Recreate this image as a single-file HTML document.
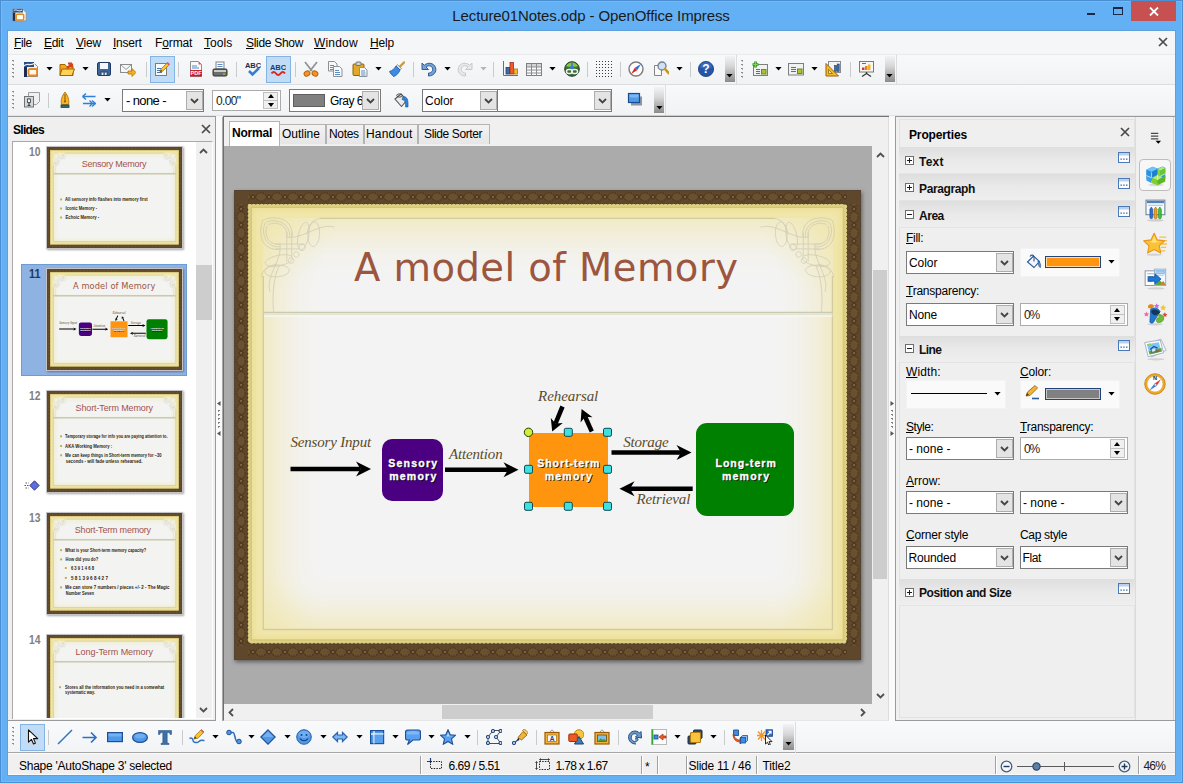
<!DOCTYPE html>
<html lang="en"><head><meta charset="utf-8"><title>Lecture01Notes.odp - OpenOffice Impress</title>
<style>
html,body{margin:0;padding:0;background:#64b0f5;}
body{width:1183px;height:783px;overflow:hidden;position:relative;font-family:"Liberation Sans",sans-serif;font-size:12px;}
#root{position:absolute;left:0;top:0;width:1183px;height:783px;overflow:hidden;}
#root div,#root span.t,#root svg{position:absolute;}
span.t{white-space:nowrap;}
u{text-decoration:underline;text-underline-offset:1px;}
</style></head>
<body><div id="root">
<!-- frame -->
<div style="left:0px;top:0px;width:1183px;height:783px;background:#64b0f5;"></div>
<div style="left:0px;top:0px;width:1183px;height:783px;box-sizing:border-box;border:1px solid #4a8fd2;"></div>
<div style="left:1px;top:1px;width:1181px;height:781px;box-sizing:border-box;border:1px solid #72bafb;"></div>
<div style="left:7px;top:30px;width:1169px;height:746px;box-sizing:border-box;border:1px solid #5f9fdc;"></div>
<div style="left:8px;top:31px;width:1167px;height:744px;background:#f5f6f7;"></div>
<span id="title" class="t" style="top:5.50px;font-size:15px;line-height:20px;color:#1a1a1a;letter-spacing:-0.104px;left:591px;transform:translateX(-50%);">Lecture01Notes.odp - OpenOffice Impress</span>
<svg style="left:12px;top:7px" width="15" height="16" viewBox="1 3 18 16">
<path d="M2 4 L14 4 L18 8 L18 18 L2 18 Z" fill="#f4f1ea" stroke="#8a8a8a" stroke-width="1"/>
<path d="M2 4 L14 4 L14 8 L2 8 Z" fill="#2d4f86"/>
<path d="M3 6 C6 3 9 8 13 5" stroke="#fff" stroke-width="1.2" fill="none"/>
<rect x="2" y="8" width="3" height="10" fill="#1d2f57"/>
<rect x="6" y="10" width="9" height="7" rx="1.5" fill="#fff" stroke="#e58b1d" stroke-width="1.8"/>
</svg>
<div style="left:1087px;top:13px;width:8px;height:2px;background:#1a2a44;"></div>
<div style="left:1113px;top:7px;width:10px;height:8px;box-sizing:border-box;border:1px solid #1a2a44;border-top:2px solid #1a2a44;"></div>
<div style="left:1131px;top:1px;width:45px;height:20px;background:#c75050;"></div>
<svg style="left:1149px;top:7px" width="10" height="9" viewBox="0 0 10 9"><path d="M1 .5L9 8.500M9 .5L1 8.500" stroke="#fff" stroke-width="1.800" fill="none"/></svg>
<!-- menubar -->
<div style="left:8px;top:31px;width:1167px;height:23px;background:#f5f6f7;"></div>
<span id="m_File" class="t" style="top:35.00px;font-size:12px;line-height:16px;color:#000;letter-spacing:-0.415px;left:14px;"><u>F</u>ile</span>
<span id="m_Edit" class="t" style="top:35.00px;font-size:12px;line-height:16px;color:#000;letter-spacing:-0.301px;left:44px;"><u>E</u>dit</span>
<span id="m_View" class="t" style="top:35.00px;font-size:12px;line-height:16px;color:#000;letter-spacing:-0.203px;left:76px;"><u>V</u>iew</span>
<span id="m_Insert" class="t" style="top:35.00px;font-size:12px;line-height:16px;color:#000;letter-spacing:-0.239px;left:113px;"><u>I</u>nsert</span>
<span id="m_Format" class="t" style="top:35.00px;font-size:12px;line-height:16px;color:#000;letter-spacing:-0.122px;left:155px;">F<u>o</u>rmat</span>
<span id="m_Tools" class="t" style="top:35.00px;font-size:12px;line-height:16px;color:#000;letter-spacing:0.077px;left:204px;"><u>T</u>ools</span>
<span id="m_Slide_Show" class="t" style="top:35.00px;font-size:12px;line-height:16px;color:#000;letter-spacing:-0.305px;left:246px;"><u>S</u>lide Show</span>
<span id="m_Window" class="t" style="top:35.00px;font-size:12px;line-height:16px;color:#000;letter-spacing:0.185px;left:314px;"><u>W</u>indow</span>
<span id="m_Help" class="t" style="top:35.00px;font-size:12px;line-height:16px;color:#000;letter-spacing:-0.147px;left:370px;"><u>H</u>elp</span>
<svg style="left:1158px;top:37px" width="10" height="10" viewBox="0 0 10 10"><path d="M1 1 L9 9 M9 1 L1 9" stroke="#4a4a4a" stroke-width="1.7" fill="none"/></svg>
<!-- toolbar1 -->
<div style="left:8px;top:54px;width:1167px;height:1px;background:#e9eaeb;"></div>
<div style="left:8px;top:55px;width:1167px;height:29px;background:linear-gradient(#f8f9fa,#f1f2f3);"></div>
<div style="left:8px;top:84px;width:1167px;height:1px;background:#dcdddf;"></div>
<div style="left:736px;top:55px;width:1px;height:30px;background:#dcdddf;"></div>
<div style="left:896px;top:55px;width:1px;height:30px;background:#dcdddf;"></div>
<div style="left:12px;top:60px;width:2px;height:1px;background:#8a8a8a;"></div>
<div style="left:13px;top:61px;width:1px;height:1px;background:#b8b8b8;"></div>
<div style="left:12px;top:64px;width:2px;height:1px;background:#8a8a8a;"></div>
<div style="left:13px;top:65px;width:1px;height:1px;background:#b8b8b8;"></div>
<div style="left:12px;top:68px;width:2px;height:1px;background:#8a8a8a;"></div>
<div style="left:13px;top:69px;width:1px;height:1px;background:#b8b8b8;"></div>
<div style="left:12px;top:72px;width:2px;height:1px;background:#8a8a8a;"></div>
<div style="left:13px;top:73px;width:1px;height:1px;background:#b8b8b8;"></div>
<div style="left:12px;top:76px;width:2px;height:1px;background:#8a8a8a;"></div>
<div style="left:13px;top:77px;width:1px;height:1px;background:#b8b8b8;"></div>
<div style="left:150px;top:56px;width:25px;height:27px;box-sizing:border-box;background:#c2dcf5;border:1px solid #84b4e6;"></div>
<div style="left:266px;top:56px;width:25px;height:27px;box-sizing:border-box;background:#c2dcf5;border:1px solid #84b4e6;"></div>
<svg style="left:23px;top:61px" width="16" height="16" viewBox="0 0 16 16"><path d="M1.5 1.5h9l4 4v10h-13z" fill="#f6f3ec" stroke="#8d8d8d"/>
<path d="M1 1h10v5H1z" fill="#274b82"/><path d="M1 6h3v10H1z" fill="#1b2c54"/>
<path d="M1 5C4 1 7 6 12 2" stroke="#e8eef8" stroke-width="1.3" fill="none"/>
<rect x="5.5" y="8" width="8.5" height="6.5" rx="1.5" fill="#fff7ea" stroke="#e38a25" stroke-width="1.8"/></svg>
<svg style="left:59px;top:61px" width="16" height="16" viewBox="0 0 16 16"><path d="M1 3.5h5l1.5 2H14v9H1z" fill="#f0a81c" stroke="#a86200"/>
<path d="M3 8h12.5l-2.5 6.5H1z" fill="#ffd257" stroke="#a86200"/>
<path d="M8 7.5L13 2.5M13 2.5h-4M13 2.5v4" stroke="#d8431b" stroke-width="2.2" fill="none"/></svg>
<svg style="left:96px;top:61px" width="16" height="16" viewBox="0 0 16 16"><rect x="1.5" y="1.5" width="13" height="13" rx="1.5" fill="#3d6595" stroke="#1f3b63"/>
<rect x="4" y="2" width="8" height="6" fill="#f4f7fb"/><rect x="4.5" y="10.5" width="7" height="4" fill="#24436e"/>
<rect x="5.5" y="11.5" width="2" height="2.5" fill="#d9e2ee"/><rect x="8.7" y="11.5" width="2" height="2.5" fill="#d9e2ee"/></svg>
<svg style="left:120px;top:61px" width="16" height="16" viewBox="0 0 16 16"><rect x="0.5" y="3.5" width="11" height="8" fill="#f6f6f6" stroke="#8c8c8c"/>
<path d="M1 4l5 4.5L11 4" stroke="#9a9a9a" fill="none"/>
<path d="M8 10h4V7.5l4 4-4 4V13H8z" fill="#f2b01e" stroke="#b77700" stroke-width=".8"/></svg>
<svg style="left:154px;top:61px" width="16" height="16" viewBox="0 0 16 16"><rect x="1.5" y="2.5" width="11" height="12" fill="#fafafa" stroke="#7d7d7d"/>
<path d="M3 7.500h4M3 9.500h3M3 11.500h5" stroke="#4a76b0" stroke-width="1"/>
<path d="M6 11l1-3 6.5-6.5 2 2L9 10z" fill="#f6c431" stroke="#a37a10" stroke-width=".8"/>
<path d="M12.5 2.2l1.3-1.3 2 2-1.3 1.3z" fill="#e4576b"/><path d="M6 11l1-2.2 1.2 1.2z" fill="#3a3a3a"/></svg>
<svg style="left:188px;top:61px" width="16" height="16" viewBox="0 0 16 16"><path d="M2.5 .5h8l3 3v12h-11z" fill="#fafafa" stroke="#8f8f8f"/>
<path d="M10.5 .5v3h3z" fill="#e05a5a"/><path d="M4 5h5M4 7h7" stroke="#4a8bd1" stroke-width="1.2"/>
<rect x="2" y="9" width="12" height="6.5" fill="#c9211e"/>
<text x="8" y="14.3" font-size="5.5" font-weight="bold" fill="#fff" text-anchor="middle" font-family="Liberation Sans,sans-serif">PDF</text></svg>
<svg style="left:212px;top:61px" width="16" height="16" viewBox="0 0 16 16"><rect x="4" y="1" width="8" height="7" fill="#fbfbfb" stroke="#858585"/>
<path d="M5.5 3.5h5M5.5 5.5h5" stroke="#5c8fc8" stroke-width="1"/>
<rect x="1" y="8" width="14" height="7" rx="1.2" fill="#6c6f6c" stroke="#2f312f"/>
<rect x="2" y="9" width="12" height="2" fill="#c9ccc9"/><rect x="11" y="12.5" width="2.2" height="1.2" fill="#8ed04a"/></svg>
<svg style="left:245px;top:61px" width="16" height="16" viewBox="0 0 16 16"><text x="8" y="7" font-size="7.5" font-weight="bold" fill="#1c2c4c" text-anchor="middle" font-family="Liberation Sans,sans-serif">ABC</text>
<path d="M4 10l3.5 3.5L14 7" stroke="#2f7fd6" stroke-width="2.6" fill="none"/></svg>
<svg style="left:270px;top:61px" width="16" height="16" viewBox="0 0 16 16"><text x="8" y="8.5" font-size="7.5" font-weight="bold" fill="#1c3a6e" text-anchor="middle" font-family="Liberation Sans,sans-serif">ABC</text>
<path d="M1.5 12.5c1.5-2 3-2 4.5 0s3 2 4.5 0 3-2 4.5 0" stroke="#d9281e" stroke-width="2" fill="none"/></svg>
<svg style="left:303px;top:61px" width="16" height="16" viewBox="0 0 16 16"><path d="M2 1l7 9M14 1l-7 9" stroke="#8e9499" stroke-width="1.8" fill="none"/>
<ellipse cx="4" cy="12.5" rx="3" ry="2.5" fill="#f29526" stroke="#b85f05" transform="rotate(-30 4 12.5)"/>
<ellipse cx="12" cy="12.5" rx="3" ry="2.5" fill="#f29526" stroke="#b85f05" transform="rotate(30 12 12.5)"/></svg>
<svg style="left:327px;top:61px" width="16" height="16" viewBox="0 0 16 16"><path d="M1.5 .5h6l2.5 2.5v7h-8.500z" fill="#f7f9fb" stroke="#8a9199"/><path d="M3 4.500h4M3 6.500h5M3 8.500h3" stroke="#5b8cc4" stroke-width="1"/>
<path d="M6.500 5.500h6l2.500 2.500v7.500h-8.500z" fill="#f7f9fb" stroke="#8a9199"/><path d="M8 9.500h4M8 11.500h5M8 13.500h5" stroke="#5b8cc4" stroke-width="1"/></svg>
<svg style="left:352px;top:61px" width="16" height="16" viewBox="0 0 16 16"><rect x="1" y="3" width="11" height="11.5" rx="1" fill="#e2a927" stroke="#8e6408"/>
<rect x="4" y="1" width="5" height="3.5" rx="1" fill="#cfd3d6" stroke="#6f7478"/>
<path d="M7.500 6.500h5l2.500 2.500v6.500h-7.500z" fill="#f7f9fb" stroke="#8a9199"/><path d="M9 10h4M9 12h4.500M9 14h4.500" stroke="#5b8cc4" stroke-width="1"/></svg>
<svg style="left:389px;top:61px" width="16" height="16" viewBox="0 0 16 16"><path d="M10 5.500l5-5 1 1-5 5z" fill="#e7a928" stroke="#a06b07" stroke-width=".7"/>
<path d="M8.500 3.500l4 4-1.500 1.500-4-4z" fill="#d9dde2" stroke="#7c8389" stroke-width=".7"/>
<path d="M7 5l4 4c-1 3-4 6-6.500 6.500C3 14 1 12 .5 10.500 3 9.500 5.500 8 7 5z" fill="#3f8be0" stroke="#1d5aa8" stroke-width=".8"/></svg>
<svg style="left:421px;top:61px" width="16" height="16" viewBox="0 0 16 16"><path d="M1 2v6.500h6.500L5 6c2-1.800 5.500-1.500 6.500 1 1 2.700-1 5-4 5v3c5 0 8.500-4 7-8.500C13 2 7 .8 3.300 4.300z" fill="#74a3d8" stroke="#2d5c99" stroke-width="1"/></svg>
<svg style="left:457px;top:61px" width="16" height="16" viewBox="0 0 16 16"><path d="M15 2v6.500H8.500L11 6C9 4.200 5.500 4.500 4.500 7c-1 2.700 1 5 4 5v3c-5 0-8.500-4-7-8.500C3 2 9 .8 12.700 4.300z" fill="#e9e9e9" stroke="#c9c9c9" stroke-width="1"/></svg>
<svg style="left:502px;top:61px" width="16" height="16" viewBox="0 0 16 16"><path d="M1.500 0v14.500H16" stroke="#6e6e6e" fill="none"/>
<rect x="4" y="6.500" width="3.500" height="6.500" fill="#3a6ea5" stroke="#1d3f6b" stroke-width=".8"/>
<rect x="8" y="1.500" width="3.500" height="11.500" fill="#ef5b2a" stroke="#a32d09" stroke-width=".8"/>
<rect x="12" y="8" width="3.500" height="5" fill="#f7b92d" stroke="#a8750a" stroke-width=".8"/></svg>
<svg style="left:526px;top:61px" width="16" height="16" viewBox="0 0 16 16"><rect x=".5" y="2.500" width="15" height="12" fill="#fdfdfd" stroke="#7f7f7f"/>
<rect x="1" y="3" width="14" height="3" fill="#d4d4d4"/>
<path d="M.5 6h15M.5 9h15M.5 12h15M5.500 2.500v12M10.500 2.500v12" stroke="#8c8c8c" stroke-width="1"/></svg>
<svg style="left:564px;top:61px" width="16" height="16" viewBox="0 0 16 16"><circle cx="8" cy="8" r="7.300" fill="#3c6a3a" stroke="#21402b"/>
<path d="M2 5c2-3 4-3.500 6-3.500s4 .5 6 3.500c-2 1.500-10 1.500-12 0z" fill="#8cc63f"/>
<path d="M8 2v5M6 5.500l2 2.500 2-2.500" stroke="#2f7fd6" stroke-width="1.600" fill="none"/>
<rect x="2.500" y="8.500" width="5.500" height="4" rx="2" fill="none" stroke="#eef3ee" stroke-width="1.500"/>
<rect x="8" y="8.500" width="5.500" height="4" rx="2" fill="none" stroke="#eef3ee" stroke-width="1.500"/></svg>
<svg style="left:596px;top:61px" width="16" height="16" viewBox="0 0 16 16"><rect x="0" y="0" width="1" height="1" fill="#3c3c3c"/><rect x="0" y="3" width="1" height="1" fill="#3c3c3c"/><rect x="0" y="6" width="1" height="1" fill="#3c3c3c"/><rect x="0" y="9" width="1" height="1" fill="#3c3c3c"/><rect x="0" y="12" width="1" height="1" fill="#3c3c3c"/><rect x="0" y="15" width="1" height="1" fill="#3c3c3c"/><rect x="3" y="0" width="1" height="1" fill="#3c3c3c"/><rect x="3" y="3" width="1" height="1" fill="#3c3c3c"/><rect x="3" y="6" width="1" height="1" fill="#3c3c3c"/><rect x="3" y="9" width="1" height="1" fill="#3c3c3c"/><rect x="3" y="12" width="1" height="1" fill="#3c3c3c"/><rect x="3" y="15" width="1" height="1" fill="#3c3c3c"/><rect x="6" y="0" width="1" height="1" fill="#3c3c3c"/><rect x="6" y="3" width="1" height="1" fill="#3c3c3c"/><rect x="6" y="6" width="1" height="1" fill="#3c3c3c"/><rect x="6" y="9" width="1" height="1" fill="#3c3c3c"/><rect x="6" y="12" width="1" height="1" fill="#3c3c3c"/><rect x="6" y="15" width="1" height="1" fill="#3c3c3c"/><rect x="9" y="0" width="1" height="1" fill="#3c3c3c"/><rect x="9" y="3" width="1" height="1" fill="#3c3c3c"/><rect x="9" y="6" width="1" height="1" fill="#3c3c3c"/><rect x="9" y="9" width="1" height="1" fill="#3c3c3c"/><rect x="9" y="12" width="1" height="1" fill="#3c3c3c"/><rect x="9" y="15" width="1" height="1" fill="#3c3c3c"/><rect x="12" y="0" width="1" height="1" fill="#3c3c3c"/><rect x="12" y="3" width="1" height="1" fill="#3c3c3c"/><rect x="12" y="6" width="1" height="1" fill="#3c3c3c"/><rect x="12" y="9" width="1" height="1" fill="#3c3c3c"/><rect x="12" y="12" width="1" height="1" fill="#3c3c3c"/><rect x="12" y="15" width="1" height="1" fill="#3c3c3c"/><rect x="15" y="0" width="1" height="1" fill="#3c3c3c"/><rect x="15" y="3" width="1" height="1" fill="#3c3c3c"/><rect x="15" y="6" width="1" height="1" fill="#3c3c3c"/><rect x="15" y="9" width="1" height="1" fill="#3c3c3c"/><rect x="15" y="12" width="1" height="1" fill="#3c3c3c"/><rect x="15" y="15" width="1" height="1" fill="#3c3c3c"/></svg>
<svg style="left:628px;top:61px" width="16" height="16" viewBox="0 0 16 16"><circle cx="8" cy="8" r="7" fill="#fdfdfd" stroke="#7b7b7b" stroke-width="1.400"/>
<path d="M13 3L9.200 9.200 6.800 6.800z" fill="#2f6fd0"/><path d="M3 13l3.800-6.200 2.400 2.400z" fill="#e0241d"/></svg>
<svg style="left:653px;top:61px" width="16" height="16" viewBox="0 0 16 16"><path d="M1.500 4.500h7v10h-7z" fill="#fbfbfb" stroke="#858585"/>
<circle cx="9" cy="5" r="4" fill="#cfe2f5" stroke="#6e8196" stroke-width="1.300"/>
<path d="M12 8l3.500 4" stroke="#c79a12" stroke-width="2.600" stroke-linecap="round"/></svg>
<svg style="left:698px;top:61px" width="16" height="16" viewBox="0 0 16 16"><circle cx="8" cy="8" r="7.600" fill="#2455a8" stroke="#163a7a" stroke-width=".8"/>
<path d="M2 6.500a6 5.500 0 0 1 12 0c-3 1.500-9 1.500-12 0z" fill="#3f74c9" opacity=".7"/>
<text x="8" y="12.300" font-size="12" font-weight="bold" fill="#fff" text-anchor="middle" font-family="Liberation Sans,sans-serif">?</text></svg>
<svg style="left:752px;top:61px" width="16" height="16" viewBox="0 0 16 16"><rect x="1.500" y="3.500" width="14" height="11" fill="#f1f1f1" stroke="#7e7e7e"/>
<path d="M4 8.500h4M4 10.500h4M4 12.500h4" stroke="#4272b8" stroke-width="1"/>
<rect x="9.500" y="8.500" width="4.500" height="4.500" fill="#a6c532" stroke="#6f8a11"/>
<path d="M3.500 .5v6M.5 3.500h6" stroke="#2f9a1c" stroke-width="2.600"/><path d="M3.500 1.300v4.400M1.300 3.500h4.400" stroke="#7fd957" stroke-width="1"/></svg>
<svg style="left:788px;top:61px" width="16" height="16" viewBox="0 0 16 16"><rect x=".5" y="2.500" width="15" height="11.500" fill="#f1f1f1" stroke="#7e7e7e"/>
<path d="M3 6.500h5M3 8.500h5M3 10.500h5" stroke="#4272b8" stroke-width="1"/>
<rect x="9.500" y="8" width="4.500" height="4.500" fill="#a6c532" stroke="#6f8a11"/></svg>
<svg style="left:825px;top:61px" width="16" height="16" viewBox="0 0 16 16"><rect x="3.500" y=".5" width="12" height="11" fill="#f4f4f4" stroke="#8a8a8a"/>
<rect x="9.500" y="4.500" width="2" height="6" fill="#3c6ea8" stroke="#1d3f6b" stroke-width=".6"/><rect x="12.200" y="3" width="2" height="7.500" fill="#3c6ea8" stroke="#1d3f6b" stroke-width=".6"/>
<path d="M1 2.500L13.500 15H1z" fill="#f6b928" stroke="#96650a"/><path d="M3.500 8.500l4 4h-4z" fill="#fbe5a0" stroke="#96650a" stroke-width=".8"/></svg>
<svg style="left:858px;top:61px" width="16" height="16" viewBox="0 0 16 16"><rect x="1.500" y=".5" width="14" height="10.500" fill="#f6f6f6" stroke="#7a7a7a"/>
<rect x="4" y="6.500" width="2.500" height="2.500" fill="#d53a1e"/><rect x="7" y="5" width="2.500" height="4" fill="#ee7b1c"/><rect x="10" y="3.500" width="2.500" height="5.500" fill="#f3b321"/>
<path d="M4 2.500h4" stroke="#4272b8"/><path d="M8.500 11v2M8.500 12.500l-4.500 3M8.500 12.500l4.500 3" stroke="#3a3a3a" stroke-width="1.300" fill="none"/></svg>
<svg style="left:46px;top:67px" width="7" height="4" viewBox="0 0 7 4"><path d="M.4 0h6.200L3.500 3.600z" fill="#000"/></svg>
<svg style="left:82px;top:67px" width="7" height="4" viewBox="0 0 7 4"><path d="M.4 0h6.200L3.500 3.600z" fill="#000"/></svg>
<svg style="left:375px;top:67px" width="7" height="4" viewBox="0 0 7 4"><path d="M.4 0h6.200L3.500 3.600z" fill="#000"/></svg>
<svg style="left:444px;top:67px" width="7" height="4" viewBox="0 0 7 4"><path d="M.4 0h6.200L3.500 3.600z" fill="#000"/></svg>
<svg style="left:549px;top:67px" width="7" height="4" viewBox="0 0 7 4"><path d="M.4 0h6.200L3.500 3.600z" fill="#000"/></svg>
<svg style="left:676px;top:67px" width="7" height="4" viewBox="0 0 7 4"><path d="M.4 0h6.200L3.500 3.600z" fill="#000"/></svg>
<svg style="left:775px;top:67px" width="7" height="4" viewBox="0 0 7 4"><path d="M.4 0h6.200L3.500 3.600z" fill="#000"/></svg>
<svg style="left:811px;top:67px" width="7" height="4" viewBox="0 0 7 4"><path d="M.4 0h6.200L3.500 3.600z" fill="#000"/></svg>
<svg style="left:480px;top:67px" width="7" height="4" viewBox="0 0 7 4"><path d="M.4 0h6.200L3.500 3.600z" fill="#b4b4b4"/></svg>
<div style="left:146px;top:62px;width:1px;height:15px;background:#c9cacb;"></div>
<div style="left:178px;top:62px;width:1px;height:15px;background:#c9cacb;"></div>
<div style="left:236px;top:62px;width:1px;height:15px;background:#c9cacb;"></div>
<div style="left:295px;top:62px;width:1px;height:15px;background:#c9cacb;"></div>
<div style="left:413px;top:62px;width:1px;height:15px;background:#c9cacb;"></div>
<div style="left:493px;top:62px;width:1px;height:15px;background:#c9cacb;"></div>
<div style="left:587px;top:62px;width:1px;height:15px;background:#c9cacb;"></div>
<div style="left:620px;top:62px;width:1px;height:15px;background:#c9cacb;"></div>
<div style="left:690px;top:62px;width:1px;height:15px;background:#c9cacb;"></div>
<div style="left:850px;top:62px;width:1px;height:15px;background:#c9cacb;"></div>
<div style="left:725px;top:56px;width:10px;height:26px;background:linear-gradient(#f3f3f3,#d6d6d6 40%,#8a8a8a);"></div>
<svg style="left:726px;top:74px" width="7" height="4" viewBox="0 0 7 4"><path d="M.4 0h6.200L3.500 3.600z" fill="#000"/></svg>
<div style="left:741px;top:60px;width:2px;height:1px;background:#8a8a8a;"></div>
<div style="left:742px;top:61px;width:1px;height:1px;background:#b8b8b8;"></div>
<div style="left:741px;top:64px;width:2px;height:1px;background:#8a8a8a;"></div>
<div style="left:742px;top:65px;width:1px;height:1px;background:#b8b8b8;"></div>
<div style="left:741px;top:68px;width:2px;height:1px;background:#8a8a8a;"></div>
<div style="left:742px;top:69px;width:1px;height:1px;background:#b8b8b8;"></div>
<div style="left:741px;top:72px;width:2px;height:1px;background:#8a8a8a;"></div>
<div style="left:742px;top:73px;width:1px;height:1px;background:#b8b8b8;"></div>
<div style="left:741px;top:76px;width:2px;height:1px;background:#8a8a8a;"></div>
<div style="left:742px;top:77px;width:1px;height:1px;background:#b8b8b8;"></div>
<div style="left:885px;top:56px;width:10px;height:26px;background:linear-gradient(#f3f3f3,#d6d6d6 40%,#8a8a8a);"></div>
<svg style="left:886px;top:74px" width="7" height="4" viewBox="0 0 7 4"><path d="M.4 0h6.200L3.500 3.600z" fill="#000"/></svg>
<!-- toolbar2 -->
<div style="left:8px;top:85px;width:1167px;height:31px;background:linear-gradient(#f8f9fa,#f1f2f3);"></div>
<div style="left:665px;top:85px;width:1px;height:31px;background:#dcdddf;"></div>
<div style="left:8px;top:115px;width:1167px;height:1px;background:#e3e4e6;"></div>
<div style="left:12px;top:91px;width:2px;height:1px;background:#8a8a8a;"></div>
<div style="left:13px;top:92px;width:1px;height:1px;background:#b8b8b8;"></div>
<div style="left:12px;top:95px;width:2px;height:1px;background:#8a8a8a;"></div>
<div style="left:13px;top:96px;width:1px;height:1px;background:#b8b8b8;"></div>
<div style="left:12px;top:99px;width:2px;height:1px;background:#8a8a8a;"></div>
<div style="left:13px;top:100px;width:1px;height:1px;background:#b8b8b8;"></div>
<div style="left:12px;top:103px;width:2px;height:1px;background:#8a8a8a;"></div>
<div style="left:13px;top:104px;width:1px;height:1px;background:#b8b8b8;"></div>
<div style="left:12px;top:107px;width:2px;height:1px;background:#8a8a8a;"></div>
<div style="left:13px;top:108px;width:1px;height:1px;background:#b8b8b8;"></div>
<svg style="left:24px;top:92px" width="16" height="16" viewBox="0 0 16 16"><path d="M4.500 .5h11v9l-3 3h-8z" fill="#eef0f1" stroke="#9aa0a4"/>
<rect x=".5" y="4.500" width="9" height="10.500" fill="#d5d8da" stroke="#6f7478"/>
<path d="M5 6.500v7M3 9h4M3.500 13.500h3" stroke="#3c3f41" stroke-width="1.200"/><rect x="3.500" y="7" width="3" height="3.500" fill="#f4f4f4" stroke="#3c3f41" stroke-width=".8"/></svg>
<div style="left:48px;top:93px;width:1px;height:15px;background:#c9cacb;"></div>
<svg style="left:57px;top:92px" width="16" height="16" viewBox="0 0 16 16"><path d="M8 0c3 4 4.500 8 3.500 12.500h-7C3.500 8 5 4 8 0z" fill="#f6b426" stroke="#b07408" stroke-width=".9"/>
<path d="M8 2v7" stroke="#8a5a05" stroke-width="1"/><circle cx="8" cy="9.500" r="1" fill="#8a5a05"/>
<rect x="4" y="13" width="8" height="2.500" fill="#2e6e6a" stroke="#1b4744" stroke-width=".8"/></svg>
<svg style="left:81px;top:92px" width="16" height="16" viewBox="0 0 16 16"><path d="M1.500 4.500h13M1.500 4.500l3.500-3M1.500 4.500l3.500 3" stroke="#2f7fd6" stroke-width="1.400" fill="none"/>
<path d="M2 11.500h13M14.500 11.500l-3.500-3M14.500 11.500l-3.500 3M11.500 11.500l-3-3M11.500 11.500l-3 3" stroke="#2f7fd6" stroke-width="1.300" fill="none"/></svg>
<svg style="left:104px;top:98px" width="7" height="4" viewBox="0 0 7 4"><path d="M.4 0h6.200L3.500 3.600z" fill="#000"/></svg>
<div style="left:122px;top:89px;width:82px;height:23px;box-sizing:border-box;background:#fff;border:1px solid #7a7a7a;"></div>
<div style="left:186px;top:91px;width:17px;height:19px;box-sizing:border-box;background:#e4e4e4;border:1px solid #adadad;"></div>
<svg style="left:190px;top:98px" width="9" height="6" viewBox="0 0 9 6"><path d="M1 1l3.500 3.500L8 1" stroke="#444" stroke-width="1.800" fill="none"/></svg>
<span id="tb_none" class="t" style="top:93.00px;font-size:13px;line-height:16px;color:#000;letter-spacing:-0.602px;left:126px;">- none -</span>
<div style="left:212px;top:90px;width:69px;height:21px;box-sizing:border-box;background:#fff;border:1px solid #ababab;"></div>
<div style="left:263px;top:92px;width:15px;height:17px;box-sizing:border-box;background:#f0f0f0;border:1px solid #c0c0c0;"></div>
<div style="left:263px;top:100.0px;width:15px;height:1px;background:#c0c0c0;"></div>
<svg style="left:268px;top:94px" width="6" height="4" viewBox="0 0 6 4"><path d="M0 4h6L3 0z" fill="#000"/></svg>
<svg style="left:268px;top:103px" width="6" height="4" viewBox="0 0 6 4"><path d="M0 0h6L3 4z" fill="#000"/></svg>
<span id="tb_000" class="t" style="top:93.00px;font-size:12px;line-height:16px;color:#222;letter-spacing:-0.625px;left:216px;">0.00"</span>
<div style="left:289px;top:89px;width:92px;height:23px;box-sizing:border-box;background:#fff;border:1px solid #7a7a7a;"></div>
<div style="left:293px;top:94px;width:32px;height:13px;box-sizing:border-box;background:#808080;border:1px solid #5e5e5e;"></div>
<span id="tb_gray" class="t" style="top:92.50px;font-size:12px;line-height:16px;color:#000;letter-spacing:-0.503px;left:330px;">Gray 6</span>
<div style="left:362px;top:91px;width:17px;height:19px;box-sizing:border-box;background:#e4e4e4;border:1px solid #adadad;"></div>
<svg style="left:366px;top:98px" width="9" height="6" viewBox="0 0 9 6"><path d="M1 1l3.500 3.500L8 1" stroke="#444" stroke-width="1.800" fill="none"/></svg>
<svg style="left:393px;top:92px" width="16" height="16" viewBox="0 0 16 16"><path d="M2 7l6-5 6 6-5.500 6.500z" fill="#ececec" stroke="#5a5a5a" stroke-width="1.100"/>
<ellipse cx="6.500" cy="3.500" rx="2.800" ry="1.600" fill="none" stroke="#4a4a4a" stroke-width="1"/>
<path d="M10 4.500c4 0 5.500 3 5 10.500h-2.500c.5-5-1-7-3.500-7.500z" fill="#2f7fd6" stroke="#1b57a0" stroke-width=".6"/></svg>
<div style="left:422px;top:89px;width:76px;height:23px;box-sizing:border-box;background:#fff;border:1px solid #7a7a7a;"></div>
<div style="left:480px;top:91px;width:17px;height:19px;box-sizing:border-box;background:#e4e4e4;border:1px solid #adadad;"></div>
<svg style="left:484px;top:98px" width="9" height="6" viewBox="0 0 9 6"><path d="M1 1l3.500 3.500L8 1" stroke="#444" stroke-width="1.800" fill="none"/></svg>
<span id="tb_color" class="t" style="top:93.00px;font-size:12px;line-height:16px;color:#000;letter-spacing:-0.037px;left:425px;">Color</span>
<div style="left:497px;top:89px;width:115px;height:23px;box-sizing:border-box;background:#fff;border:1px solid #7a7a7a;"></div>
<div style="left:594px;top:91px;width:17px;height:19px;box-sizing:border-box;background:#e4e4e4;border:1px solid #adadad;"></div>
<svg style="left:598px;top:98px" width="9" height="6" viewBox="0 0 9 6"><path d="M1 1l3.500 3.500L8 1" stroke="#444" stroke-width="1.800" fill="none"/></svg>
<svg style="left:627px;top:92px" width="16" height="16" viewBox="0 0 16 16"><rect x="4" y="4.500" width="11" height="9" fill="#8c96a3"/>
<rect x="1.500" y="1.500" width="11" height="9" fill="#4f9be8" stroke="#1b4c93" stroke-width="1.200"/>
<rect x="2.500" y="2.500" width="9" height="3" fill="#8fc3f7" opacity=".7"/></svg>
<div style="left:654px;top:87px;width:10px;height:26px;background:linear-gradient(#f3f3f3,#d6d6d6 40%,#8a8a8a);"></div>
<svg style="left:656px;top:106px" width="7" height="4" viewBox="0 0 7 4"><path d="M.4 0h6.200L3.500 3.600z" fill="#000"/></svg>
<!-- slides_panel -->
<div style="left:8px;top:116px;width:208px;height:605px;box-sizing:border-box;background:#efefef;border:1px solid #9a9a9a;border-left:none;"></div>
<div style="left:216px;top:117px;width:6px;height:604px;background:#fafafa;"></div>
<span id="slides_hdr" class="t" style="top:122.00px;font-size:12px;line-height:16px;color:#000;font-weight:bold;letter-spacing:-0.727px;left:13px;">Slides</span>
<svg style="left:201px;top:124px" width="10" height="10" viewBox="0 0 10 10"><path d="M1 1L9 9M9 1L1 9" stroke="#4a4a4a" stroke-width="1.700" fill="none"/></svg>
<div style="left:12px;top:141px;width:201px;height:578px;box-sizing:border-box;background:#fff;border:1px solid #a9a9a9;border-bottom:none;border-right-color:#fdfdfd;"></div>
<div style="left:0px;top:141px;width:216px;height:577px;overflow:hidden;"><span id="num10" class="t" style="top:3.00px;font-size:12px;line-height:16px;color:#808080;font-weight:bold;transform:scaleX(0.8610);transform-origin:0 50%;left:28.8px;">10</span>
<div style="left:46px;top:5px;width:137px;height:103px;box-sizing:border-box;background:#fff;border:1px solid #c4c4c4;box-shadow:1px 1px 2px rgba(0,0,0,.35);"></div>
<div style="left:47px;top:6px;width:135px;height:101px;overflow:hidden;"><div style="left:0px;top:0px;width:627px;height:470px;transform:scale(0.21531);transform-origin:0 0;"><svg style="left:0;top:0" width="627" height="470" viewBox="0 0 627 470">
<defs><pattern id="bph1" width="16" height="14" patternUnits="userSpaceOnUse" patternTransform="translate(3 0)"><ellipse cx="8" cy="7" rx="5.300" ry="4.200" fill="#69512f" stroke="#49341c" stroke-width="1.100" stroke-dasharray="1.800 .8"/><path d="M0 4.500L2.300 7L0 9.500M16 4.500L13.700 7L16 9.500" fill="none" stroke="#49341c" stroke-width="1.100"/><rect x="-.8" y="6.200" width="1.600" height="1.600" fill="#8a6e48"/><rect x="15.200" y="6.200" width="1.600" height="1.600" fill="#8a6e48"/><path d="M0 1.500h16M0 12.500h16" stroke="#5a4128" stroke-width=".8" stroke-dasharray="2 2"/></pattern>
<pattern id="bpv1" width="16" height="14" patternUnits="userSpaceOnUse" patternTransform="rotate(90) translate(3 0)"><ellipse cx="8" cy="7" rx="5.300" ry="4.200" fill="#69512f" stroke="#49341c" stroke-width="1.100" stroke-dasharray="1.800 .8"/><path d="M0 4.500L2.300 7L0 9.500M16 4.500L13.700 7L16 9.500" fill="none" stroke="#49341c" stroke-width="1.100"/><rect x="-.8" y="6.200" width="1.600" height="1.600" fill="#8a6e48"/><rect x="15.200" y="6.200" width="1.600" height="1.600" fill="#8a6e48"/><path d="M0 1.500h16M0 12.500h16" stroke="#5a4128" stroke-width=".8" stroke-dasharray="2 2"/></pattern></defs>
<rect width="627" height="470" fill="#5f472b"/>
<rect x="14" y="0" width="599" height="14" fill="url(#bph1)"/><g transform="translate(0 455)"><rect x="14" y="0" width="599" height="14" fill="url(#bph1)"/></g>
<g transform="translate(14 0)"><rect x="-14" y="14" width="14" height="442" fill="url(#bpv1)"/></g><g transform="translate(627 0)"><rect x="-14" y="14" width="14" height="442" fill="url(#bpv1)"/></g>
<rect x=".5" y=".5" width="626" height="469" fill="none" stroke="#574330" stroke-width="1"/>
<rect x="15.6" y="15.700000000000001" width="595.7" height="436.2" fill="none" stroke="#3f2c18" stroke-width="5.200" stroke-linecap="round" stroke-dasharray="0 4" opacity=".45"/>
<rect x="15.799999999999999" y="15.9" width="595.3" height="435.6" fill="#d8cb80" stroke="#d8cb80" stroke-width="4.400" stroke-linecap="round" stroke-dasharray="0 4"/>
<rect x="15.5" y="15.600000000000001" width="595.9" height="436.2" fill="none" stroke="#e0d186" stroke-width="1.600"/>
<rect x="17.5" y="17.4" width="591.8000000000001" height="432.50000000000006" fill="#eadc94" stroke="#d6c572" stroke-width="1"/>
</svg>
<div style="left:18.3px;top:18.2px;width:590.2px;height:430.90000000000003px;background:#f0e6aa;box-shadow:inset 0 0 6px 1px #ebdc90;"></div>
<div style="left:29.0px;top:28.0px;width:569.7px;height:411.90000000000003px;background:#f3f3f2;box-shadow:inset 0 0 26px 3px #f0e8b4;"></div>
<svg style="left:0;top:0" width="627" height="470" viewBox="0 0 627 470">
<path d="M86 28.4H541" stroke="#d2cb9e" stroke-width="3.6" fill="none"/>
<path d="M29.3 86V439.5H598.4V86" stroke="#d2cb9e" stroke-width="3.6" fill="none"/>
<path d="M30 124.500H598" stroke="#bebc94" stroke-width="6.500"/><path d="M30 122.500H598.4" stroke="#c9cab0" stroke-width="1.600"/><path d="M30 124.500H598.4" stroke="#e3e4d2" stroke-width="1.400"/><path d="M30 126H598.4" stroke="#fbfbf8" stroke-width="1"/>
<g fill="none" stroke="#c4c2ae" stroke-width="1.600" opacity=".7">
<ellipse cx="79.500" cy="44.500" rx="5.800" ry="12"/><ellipse cx="69.500" cy="46" rx="5.500" ry="14" transform="rotate(12 69.500 46)"/>
<ellipse cx="45" cy="79" rx="12" ry="5.800"/><ellipse cx="47" cy="69" rx="14" ry="5.500" transform="rotate(-12 47 69)"/>
<path d="M29 30C40 26 55 30 58 47M29 30C26 42 30 56 47 59M86 28.500C76 30 73 40 73 44M29.500 86C31 76 41 73 45 73M52.500 42V72M43 52H72M39.500 122C38 102 40 86 45.500 75"/></g>
<g transform="translate(627 0) scale(-1 1)"><g fill="none" stroke="#c4c2ae" stroke-width="1.600" opacity=".7">
<ellipse cx="79.500" cy="44.500" rx="5.800" ry="12"/><ellipse cx="69.500" cy="46" rx="5.500" ry="14" transform="rotate(12 69.500 46)"/>
<ellipse cx="45" cy="79" rx="12" ry="5.800"/><ellipse cx="47" cy="69" rx="14" ry="5.500" transform="rotate(-12 47 69)"/>
<path d="M29 30C40 26 55 30 58 47M29 30C26 42 30 56 47 59M86 28.500C76 30 73 40 73 44M29.500 86C31 76 41 73 45 73M52.500 42V72M43 52H72M39.500 122C38 102 40 86 45.500 75"/></g></g>
</svg>
<span id="s10_title" class="t" style="top:53.10px;font-size:42px;line-height:48px;color:#a4524a;font-family:'Liberation Sans',sans-serif;letter-spacing:-1.308px;left:161.6px;">Sensory Memory</span>
<div style="left:60.599999999999994px;top:238.9px;width:9px;height:9px;background:#c2ab45;"></div>
<span id="s10_l0" class="t" style="top:228.90px;font-size:24px;line-height:28px;color:#2e1e0a;font-weight:bold;font-family:'Liberation Sans',sans-serif;transform:scaleX(0.8130);transform-origin:0 50%;left:83.6px;">All sensory info flashes into memory first</span>
<div style="left:60.599999999999994px;top:280.7px;width:9px;height:9px;background:#c2ab45;"></div>
<span id="s10_l1" class="t" style="top:270.70px;font-size:24px;line-height:28px;color:#2e1e0a;font-weight:bold;font-family:'Liberation Sans',sans-serif;transform:scaleX(0.8060);transform-origin:0 50%;left:85.5px;">Iconic Memory -</span>
<div style="left:60.599999999999994px;top:322.5px;width:9px;height:9px;background:#c2ab45;"></div>
<span id="s10_l2" class="t" style="top:312.50px;font-size:24px;line-height:28px;color:#2e1e0a;font-weight:bold;font-family:'Liberation Sans',sans-serif;transform:scaleX(0.8150);transform-origin:0 50%;left:85.5px;">Echoic Memory -</span>
</div>
</div>
<div style="left:21px;top:123px;width:166px;height:112px;box-sizing:border-box;background:#8eb3e3;border:1px solid #6d9bd2;"></div>
<span id="num11" class="t" style="top:125.00px;font-size:12px;line-height:16px;color:#1f3a5f;font-weight:bold;transform:scaleX(0.9060);transform-origin:0 50%;left:28.8px;">11</span>
<div style="left:46px;top:127px;width:137px;height:103px;box-sizing:border-box;background:#fff;border:1px solid #c4c4c4;box-shadow:1px 1px 2px rgba(0,0,0,.35);"></div>
<div style="left:47px;top:128px;width:135px;height:101px;overflow:hidden;"><div style="left:0px;top:0px;width:627px;height:470px;transform:scale(0.21531);transform-origin:0 0;"><svg style="left:0;top:0" width="627" height="470" viewBox="0 0 627 470">
<defs><pattern id="bph2" width="16" height="14" patternUnits="userSpaceOnUse" patternTransform="translate(3 0)"><ellipse cx="8" cy="7" rx="5.300" ry="4.200" fill="#69512f" stroke="#49341c" stroke-width="1.100" stroke-dasharray="1.800 .8"/><path d="M0 4.500L2.300 7L0 9.500M16 4.500L13.700 7L16 9.500" fill="none" stroke="#49341c" stroke-width="1.100"/><rect x="-.8" y="6.200" width="1.600" height="1.600" fill="#8a6e48"/><rect x="15.200" y="6.200" width="1.600" height="1.600" fill="#8a6e48"/><path d="M0 1.500h16M0 12.500h16" stroke="#5a4128" stroke-width=".8" stroke-dasharray="2 2"/></pattern>
<pattern id="bpv2" width="16" height="14" patternUnits="userSpaceOnUse" patternTransform="rotate(90) translate(3 0)"><ellipse cx="8" cy="7" rx="5.300" ry="4.200" fill="#69512f" stroke="#49341c" stroke-width="1.100" stroke-dasharray="1.800 .8"/><path d="M0 4.500L2.300 7L0 9.500M16 4.500L13.700 7L16 9.500" fill="none" stroke="#49341c" stroke-width="1.100"/><rect x="-.8" y="6.200" width="1.600" height="1.600" fill="#8a6e48"/><rect x="15.200" y="6.200" width="1.600" height="1.600" fill="#8a6e48"/><path d="M0 1.500h16M0 12.500h16" stroke="#5a4128" stroke-width=".8" stroke-dasharray="2 2"/></pattern></defs>
<rect width="627" height="470" fill="#5f472b"/>
<rect x="14" y="0" width="599" height="14" fill="url(#bph2)"/><g transform="translate(0 455)"><rect x="14" y="0" width="599" height="14" fill="url(#bph2)"/></g>
<g transform="translate(14 0)"><rect x="-14" y="14" width="14" height="442" fill="url(#bpv2)"/></g><g transform="translate(627 0)"><rect x="-14" y="14" width="14" height="442" fill="url(#bpv2)"/></g>
<rect x=".5" y=".5" width="626" height="469" fill="none" stroke="#574330" stroke-width="1"/>
<rect x="15.6" y="15.700000000000001" width="595.7" height="436.2" fill="none" stroke="#3f2c18" stroke-width="5.200" stroke-linecap="round" stroke-dasharray="0 4" opacity=".45"/>
<rect x="15.799999999999999" y="15.9" width="595.3" height="435.6" fill="#d8cb80" stroke="#d8cb80" stroke-width="4.400" stroke-linecap="round" stroke-dasharray="0 4"/>
<rect x="15.5" y="15.600000000000001" width="595.9" height="436.2" fill="none" stroke="#e0d186" stroke-width="1.600"/>
<rect x="17.5" y="17.4" width="591.8000000000001" height="432.50000000000006" fill="#eadc94" stroke="#d6c572" stroke-width="1"/>
</svg>
<div style="left:18.3px;top:18.2px;width:590.2px;height:430.90000000000003px;background:#f0e6aa;box-shadow:inset 0 0 6px 1px #ebdc90;"></div>
<div style="left:29.0px;top:28.0px;width:569.7px;height:411.90000000000003px;background:#f3f3f2;box-shadow:inset 0 0 26px 3px #f0e8b4;"></div>
<svg style="left:0;top:0" width="627" height="470" viewBox="0 0 627 470">
<path d="M86 28.4H541" stroke="#d2cb9e" stroke-width="3.6" fill="none"/>
<path d="M29.3 86V439.5H598.4V86" stroke="#d2cb9e" stroke-width="3.6" fill="none"/>
<path d="M30 124.500H598" stroke="#bebc94" stroke-width="6.500"/><path d="M30 122.500H598.4" stroke="#c9cab0" stroke-width="1.600"/><path d="M30 124.500H598.4" stroke="#e3e4d2" stroke-width="1.400"/><path d="M30 126H598.4" stroke="#fbfbf8" stroke-width="1"/>
<g fill="none" stroke="#c4c2ae" stroke-width="1.600" opacity=".7">
<ellipse cx="79.500" cy="44.500" rx="5.800" ry="12"/><ellipse cx="69.500" cy="46" rx="5.500" ry="14" transform="rotate(12 69.500 46)"/>
<ellipse cx="45" cy="79" rx="12" ry="5.800"/><ellipse cx="47" cy="69" rx="14" ry="5.500" transform="rotate(-12 47 69)"/>
<path d="M29 30C40 26 55 30 58 47M29 30C26 42 30 56 47 59M86 28.500C76 30 73 40 73 44M29.500 86C31 76 41 73 45 73M52.500 42V72M43 52H72M39.500 122C38 102 40 86 45.500 75"/></g>
<g transform="translate(627 0) scale(-1 1)"><g fill="none" stroke="#c4c2ae" stroke-width="1.600" opacity=".7">
<ellipse cx="79.500" cy="44.500" rx="5.800" ry="12"/><ellipse cx="69.500" cy="46" rx="5.500" ry="14" transform="rotate(12 69.500 46)"/>
<ellipse cx="45" cy="79" rx="12" ry="5.800"/><ellipse cx="47" cy="69" rx="14" ry="5.500" transform="rotate(-12 47 69)"/>
<path d="M29 30C40 26 55 30 58 47M29 30C26 42 30 56 47 59M86 28.500C76 30 73 40 73 44M29.500 86C31 76 41 73 45 73M52.500 42V72M43 52H72M39.500 122C38 102 40 86 45.500 75"/></g></g>
</svg>
<span id="s11_title" class="t" style="top:58.00px;font-size:38.5px;line-height:46px;color:#9c5640;font-family:'DejaVu Sans','Liberation Sans',sans-serif;letter-spacing:0.385px;left:312.2px;transform:translateX(-50%);">A model of Memory</span>
<div style="left:148px;top:249px;width:61px;height:62px;background:#4b0082;border-radius:10px;"></div>
<div style="left:295px;top:242.5px;width:78.7px;height:74px;background:#ff950e;"></div>
<div style="left:462px;top:233px;width:98px;height:93px;background:#008000;border-radius:11px;"></div>
<div style="left:128.7px;top:266.6px;width:101.25px;height:27px;font-weight:bold;color:#fff;text-align:center;letter-spacing:1.250px;font-size:10.500px;line-height:13.200px;white-space:nowrap;-webkit-text-stroke:.35px #fff;text-shadow:1px 1px 0 rgba(0,0,0,.85),0 0 1px rgba(0,0,0,.5);">Sensory<br>memory</div>
<div style="left:284.20000000000005px;top:266.6px;width:101.25px;height:27px;font-weight:bold;color:#fff;text-align:center;letter-spacing:1.250px;font-size:10.500px;line-height:13.200px;white-space:nowrap;-webkit-text-stroke:.35px #fff;text-shadow:1px 1px 0 rgba(0,0,0,.85),0 0 1px rgba(0,0,0,.5);"><span style="letter-spacing:.95px">Short-term</span><br>memory</div>
<div style="left:461.5px;top:266.6px;width:101.25px;height:27px;font-weight:bold;color:#fff;text-align:center;letter-spacing:1.250px;font-size:10.500px;line-height:13.200px;white-space:nowrap;-webkit-text-stroke:.35px #fff;text-shadow:1px 1px 0 rgba(0,0,0,.85),0 0 1px rgba(0,0,0,.5);"><span style="letter-spacing:1.050px">Long-term</span><br>memory</div>
<svg style="left:0;top:0" width="627" height="470" viewBox="0 0 627 470"><path d="M56.5 276.7H126.5V281.3H56.5Z" fill="#000"/><path d="M137 279L122 271.5L126.5 279L122 286.5Z" fill="#000"/><path d="M211 277.4H274.0V282.0H211Z" fill="#000"/><path d="M284.5 279.7L269.5 272.2L274.0 279.7L269.5 287.2Z" fill="#000"/><path d="M377.5 260.2H447.0V264.8H377.5Z" fill="#000"/><path d="M457.5 262.5L442.5 255.0L447.0 262.5L442.5 270.0Z" fill="#000"/><path d="M458.70000000000005 296.5H396.0V301.1H458.70000000000005Z" fill="#000"/><path d="M385.5 298.8L400.5 291.3L396.0 298.8L400.5 306.3Z" fill="#000"/><path d="M326.4 215.6L319.4 232.8L323.5 234.5L330.6 217.4Z" fill="#000"/><path d="M318.2 241.5L316.8 227.9L321.4 233.6L328.8 232.9Z" fill="#000"/><path d="M359.8 240.6L353.2 225.8L349.1 227.7L355.8 242.4Z" fill="#000"/><path d="M347.6 219.0L358.5 227.2L351.1 226.7L346.6 232.6Z" fill="#000"/></svg>
<span id="s11_Sensory_Input" class="t" style="top:243.10px;font-size:15px;line-height:18px;color:#5a4c2a;font-style:italic;font-family:'Liberation Serif','DejaVu Serif',serif;left:56.4px;">Sensory Input</span>
<span id="s11_Attention" class="t" style="top:254.60px;font-size:15px;line-height:18px;color:#5a4c2a;font-style:italic;font-family:'Liberation Serif','DejaVu Serif',serif;left:214.9px;">Attention</span>
<span id="s11_Rehearsal" class="t" style="top:197.10px;font-size:15px;line-height:18px;color:#5a4c2a;font-style:italic;font-family:'Liberation Serif','DejaVu Serif',serif;left:304.1px;">Rehearsal</span>
<span id="s11_Storage" class="t" style="top:243.10px;font-size:15px;line-height:18px;color:#5a4c2a;font-style:italic;font-family:'Liberation Serif','DejaVu Serif',serif;left:389.2px;">Storage</span>
<span id="s11_Retrieval" class="t" style="top:300.10px;font-size:15px;line-height:18px;color:#5a4c2a;font-style:italic;font-family:'Liberation Serif','DejaVu Serif',serif;left:402.5px;">Retrieval</span>
</div>
</div>
<span id="num12" class="t" style="top:247.00px;font-size:12px;line-height:16px;color:#808080;font-weight:bold;transform:scaleX(0.8610);transform-origin:0 50%;left:28.8px;">12</span>
<div style="left:46px;top:249px;width:137px;height:103px;box-sizing:border-box;background:#fff;border:1px solid #c4c4c4;box-shadow:1px 1px 2px rgba(0,0,0,.35);"></div>
<div style="left:47px;top:250px;width:135px;height:101px;overflow:hidden;"><div style="left:0px;top:0px;width:627px;height:470px;transform:scale(0.21531);transform-origin:0 0;"><svg style="left:0;top:0" width="627" height="470" viewBox="0 0 627 470">
<defs><pattern id="bph3" width="16" height="14" patternUnits="userSpaceOnUse" patternTransform="translate(3 0)"><ellipse cx="8" cy="7" rx="5.300" ry="4.200" fill="#69512f" stroke="#49341c" stroke-width="1.100" stroke-dasharray="1.800 .8"/><path d="M0 4.500L2.300 7L0 9.500M16 4.500L13.700 7L16 9.500" fill="none" stroke="#49341c" stroke-width="1.100"/><rect x="-.8" y="6.200" width="1.600" height="1.600" fill="#8a6e48"/><rect x="15.200" y="6.200" width="1.600" height="1.600" fill="#8a6e48"/><path d="M0 1.500h16M0 12.500h16" stroke="#5a4128" stroke-width=".8" stroke-dasharray="2 2"/></pattern>
<pattern id="bpv3" width="16" height="14" patternUnits="userSpaceOnUse" patternTransform="rotate(90) translate(3 0)"><ellipse cx="8" cy="7" rx="5.300" ry="4.200" fill="#69512f" stroke="#49341c" stroke-width="1.100" stroke-dasharray="1.800 .8"/><path d="M0 4.500L2.300 7L0 9.500M16 4.500L13.700 7L16 9.500" fill="none" stroke="#49341c" stroke-width="1.100"/><rect x="-.8" y="6.200" width="1.600" height="1.600" fill="#8a6e48"/><rect x="15.200" y="6.200" width="1.600" height="1.600" fill="#8a6e48"/><path d="M0 1.500h16M0 12.500h16" stroke="#5a4128" stroke-width=".8" stroke-dasharray="2 2"/></pattern></defs>
<rect width="627" height="470" fill="#5f472b"/>
<rect x="14" y="0" width="599" height="14" fill="url(#bph3)"/><g transform="translate(0 455)"><rect x="14" y="0" width="599" height="14" fill="url(#bph3)"/></g>
<g transform="translate(14 0)"><rect x="-14" y="14" width="14" height="442" fill="url(#bpv3)"/></g><g transform="translate(627 0)"><rect x="-14" y="14" width="14" height="442" fill="url(#bpv3)"/></g>
<rect x=".5" y=".5" width="626" height="469" fill="none" stroke="#574330" stroke-width="1"/>
<rect x="15.6" y="15.700000000000001" width="595.7" height="436.2" fill="none" stroke="#3f2c18" stroke-width="5.200" stroke-linecap="round" stroke-dasharray="0 4" opacity=".45"/>
<rect x="15.799999999999999" y="15.9" width="595.3" height="435.6" fill="#d8cb80" stroke="#d8cb80" stroke-width="4.400" stroke-linecap="round" stroke-dasharray="0 4"/>
<rect x="15.5" y="15.600000000000001" width="595.9" height="436.2" fill="none" stroke="#e0d186" stroke-width="1.600"/>
<rect x="17.5" y="17.4" width="591.8000000000001" height="432.50000000000006" fill="#eadc94" stroke="#d6c572" stroke-width="1"/>
</svg>
<div style="left:18.3px;top:18.2px;width:590.2px;height:430.90000000000003px;background:#f0e6aa;box-shadow:inset 0 0 6px 1px #ebdc90;"></div>
<div style="left:29.0px;top:28.0px;width:569.7px;height:411.90000000000003px;background:#f3f3f2;box-shadow:inset 0 0 26px 3px #f0e8b4;"></div>
<svg style="left:0;top:0" width="627" height="470" viewBox="0 0 627 470">
<path d="M86 28.4H541" stroke="#d2cb9e" stroke-width="3.6" fill="none"/>
<path d="M29.3 86V439.5H598.4V86" stroke="#d2cb9e" stroke-width="3.6" fill="none"/>
<path d="M30 124.500H598" stroke="#bebc94" stroke-width="6.500"/><path d="M30 122.500H598.4" stroke="#c9cab0" stroke-width="1.600"/><path d="M30 124.500H598.4" stroke="#e3e4d2" stroke-width="1.400"/><path d="M30 126H598.4" stroke="#fbfbf8" stroke-width="1"/>
<g fill="none" stroke="#c4c2ae" stroke-width="1.600" opacity=".7">
<ellipse cx="79.500" cy="44.500" rx="5.800" ry="12"/><ellipse cx="69.500" cy="46" rx="5.500" ry="14" transform="rotate(12 69.500 46)"/>
<ellipse cx="45" cy="79" rx="12" ry="5.800"/><ellipse cx="47" cy="69" rx="14" ry="5.500" transform="rotate(-12 47 69)"/>
<path d="M29 30C40 26 55 30 58 47M29 30C26 42 30 56 47 59M86 28.500C76 30 73 40 73 44M29.500 86C31 76 41 73 45 73M52.500 42V72M43 52H72M39.500 122C38 102 40 86 45.500 75"/></g>
<g transform="translate(627 0) scale(-1 1)"><g fill="none" stroke="#c4c2ae" stroke-width="1.600" opacity=".7">
<ellipse cx="79.500" cy="44.500" rx="5.800" ry="12"/><ellipse cx="69.500" cy="46" rx="5.500" ry="14" transform="rotate(12 69.500 46)"/>
<ellipse cx="45" cy="79" rx="12" ry="5.800"/><ellipse cx="47" cy="69" rx="14" ry="5.500" transform="rotate(-12 47 69)"/>
<path d="M29 30C40 26 55 30 58 47M29 30C26 42 30 56 47 59M86 28.500C76 30 73 40 73 44M29.500 86C31 76 41 73 45 73M52.500 42V72M43 52H72M39.500 122C38 102 40 86 45.500 75"/></g></g>
</svg>
<span id="s12_title" class="t" style="top:53.10px;font-size:42px;line-height:48px;color:#a4524a;font-family:'Liberation Sans',sans-serif;letter-spacing:-0.709px;left:132.8px;">Short-Term Memory</span>
<div style="left:60.599999999999994px;top:205.9px;width:9px;height:9px;background:#c2ab45;"></div>
<span id="s12_l0" class="t" style="top:195.90px;font-size:24px;line-height:28px;color:#2e1e0a;font-weight:bold;font-family:'Liberation Sans',sans-serif;transform:scaleX(0.7620);transform-origin:0 50%;left:83.6px;">Temporary storage for info you are paying attention to.</span>
<div style="left:60.599999999999994px;top:251.4px;width:9px;height:9px;background:#c2ab45;"></div>
<span id="s12_l1" class="t" style="top:241.40px;font-size:24px;line-height:28px;color:#2e1e0a;font-weight:bold;font-family:'Liberation Sans',sans-serif;transform:scaleX(0.8190);transform-origin:0 50%;left:83.6px;">AKA Working Memory :</span>
<div style="left:60.599999999999994px;top:294.2px;width:9px;height:9px;background:#c2ab45;"></div>
<span id="s12_l2" class="t" style="top:284.20px;font-size:24px;line-height:28px;color:#2e1e0a;font-weight:bold;font-family:'Liberation Sans',sans-serif;transform:scaleX(0.7900);transform-origin:0 50%;left:83.6px;">We can keep things in Short-term memory for ~30</span>
<span id="s12_l3" class="t" style="top:312.00px;font-size:24px;line-height:28px;color:#2e1e0a;font-weight:bold;font-family:'Liberation Sans',sans-serif;transform:scaleX(0.8400);transform-origin:0 50%;left:87.3px;">seconds - will fade unless rehearsed.</span>
</div>
</div>
<span id="num13" class="t" style="top:369.00px;font-size:12px;line-height:16px;color:#808080;font-weight:bold;transform:scaleX(0.8610);transform-origin:0 50%;left:28.8px;">13</span>
<div style="left:46px;top:371px;width:137px;height:103px;box-sizing:border-box;background:#fff;border:1px solid #c4c4c4;box-shadow:1px 1px 2px rgba(0,0,0,.35);"></div>
<div style="left:47px;top:372px;width:135px;height:101px;overflow:hidden;"><div style="left:0px;top:0px;width:627px;height:470px;transform:scale(0.21531);transform-origin:0 0;"><svg style="left:0;top:0" width="627" height="470" viewBox="0 0 627 470">
<defs><pattern id="bph4" width="16" height="14" patternUnits="userSpaceOnUse" patternTransform="translate(3 0)"><ellipse cx="8" cy="7" rx="5.300" ry="4.200" fill="#69512f" stroke="#49341c" stroke-width="1.100" stroke-dasharray="1.800 .8"/><path d="M0 4.500L2.300 7L0 9.500M16 4.500L13.700 7L16 9.500" fill="none" stroke="#49341c" stroke-width="1.100"/><rect x="-.8" y="6.200" width="1.600" height="1.600" fill="#8a6e48"/><rect x="15.200" y="6.200" width="1.600" height="1.600" fill="#8a6e48"/><path d="M0 1.500h16M0 12.500h16" stroke="#5a4128" stroke-width=".8" stroke-dasharray="2 2"/></pattern>
<pattern id="bpv4" width="16" height="14" patternUnits="userSpaceOnUse" patternTransform="rotate(90) translate(3 0)"><ellipse cx="8" cy="7" rx="5.300" ry="4.200" fill="#69512f" stroke="#49341c" stroke-width="1.100" stroke-dasharray="1.800 .8"/><path d="M0 4.500L2.300 7L0 9.500M16 4.500L13.700 7L16 9.500" fill="none" stroke="#49341c" stroke-width="1.100"/><rect x="-.8" y="6.200" width="1.600" height="1.600" fill="#8a6e48"/><rect x="15.200" y="6.200" width="1.600" height="1.600" fill="#8a6e48"/><path d="M0 1.500h16M0 12.500h16" stroke="#5a4128" stroke-width=".8" stroke-dasharray="2 2"/></pattern></defs>
<rect width="627" height="470" fill="#5f472b"/>
<rect x="14" y="0" width="599" height="14" fill="url(#bph4)"/><g transform="translate(0 455)"><rect x="14" y="0" width="599" height="14" fill="url(#bph4)"/></g>
<g transform="translate(14 0)"><rect x="-14" y="14" width="14" height="442" fill="url(#bpv4)"/></g><g transform="translate(627 0)"><rect x="-14" y="14" width="14" height="442" fill="url(#bpv4)"/></g>
<rect x=".5" y=".5" width="626" height="469" fill="none" stroke="#574330" stroke-width="1"/>
<rect x="15.6" y="15.700000000000001" width="595.7" height="436.2" fill="none" stroke="#3f2c18" stroke-width="5.200" stroke-linecap="round" stroke-dasharray="0 4" opacity=".45"/>
<rect x="15.799999999999999" y="15.9" width="595.3" height="435.6" fill="#d8cb80" stroke="#d8cb80" stroke-width="4.400" stroke-linecap="round" stroke-dasharray="0 4"/>
<rect x="15.5" y="15.600000000000001" width="595.9" height="436.2" fill="none" stroke="#e0d186" stroke-width="1.600"/>
<rect x="17.5" y="17.4" width="591.8000000000001" height="432.50000000000006" fill="#eadc94" stroke="#d6c572" stroke-width="1"/>
</svg>
<div style="left:18.3px;top:18.2px;width:590.2px;height:430.90000000000003px;background:#f0e6aa;box-shadow:inset 0 0 6px 1px #ebdc90;"></div>
<div style="left:29.0px;top:28.0px;width:569.7px;height:411.90000000000003px;background:#f3f3f2;box-shadow:inset 0 0 26px 3px #f0e8b4;"></div>
<svg style="left:0;top:0" width="627" height="470" viewBox="0 0 627 470">
<path d="M86 28.4H541" stroke="#d2cb9e" stroke-width="3.6" fill="none"/>
<path d="M29.3 86V439.5H598.4V86" stroke="#d2cb9e" stroke-width="3.6" fill="none"/>
<path d="M30 124.500H598" stroke="#bebc94" stroke-width="6.500"/><path d="M30 122.500H598.4" stroke="#c9cab0" stroke-width="1.600"/><path d="M30 124.500H598.4" stroke="#e3e4d2" stroke-width="1.400"/><path d="M30 126H598.4" stroke="#fbfbf8" stroke-width="1"/>
<g fill="none" stroke="#c4c2ae" stroke-width="1.600" opacity=".7">
<ellipse cx="79.500" cy="44.500" rx="5.800" ry="12"/><ellipse cx="69.500" cy="46" rx="5.500" ry="14" transform="rotate(12 69.500 46)"/>
<ellipse cx="45" cy="79" rx="12" ry="5.800"/><ellipse cx="47" cy="69" rx="14" ry="5.500" transform="rotate(-12 47 69)"/>
<path d="M29 30C40 26 55 30 58 47M29 30C26 42 30 56 47 59M86 28.500C76 30 73 40 73 44M29.500 86C31 76 41 73 45 73M52.500 42V72M43 52H72M39.500 122C38 102 40 86 45.500 75"/></g>
<g transform="translate(627 0) scale(-1 1)"><g fill="none" stroke="#c4c2ae" stroke-width="1.600" opacity=".7">
<ellipse cx="79.500" cy="44.500" rx="5.800" ry="12"/><ellipse cx="69.500" cy="46" rx="5.500" ry="14" transform="rotate(12 69.500 46)"/>
<ellipse cx="45" cy="79" rx="12" ry="5.800"/><ellipse cx="47" cy="69" rx="14" ry="5.500" transform="rotate(-12 47 69)"/>
<path d="M29 30C40 26 55 30 58 47M29 30C26 42 30 56 47 59M86 28.500C76 30 73 40 73 44M29.500 86C31 76 41 73 45 73M52.500 42V72M43 52H72M39.500 122C38 102 40 86 45.500 75"/></g></g>
</svg>
<span id="s13_title" class="t" style="top:55.00px;font-size:42px;line-height:48px;color:#a4524a;font-family:'Liberation Sans',sans-serif;letter-spacing:-1.036px;left:129.1px;">Short-Term memory</span>
<div style="left:60.599999999999994px;top:167.8px;width:9px;height:9px;background:#c2ab45;"></div>
<span id="s13_l0" class="t" style="top:157.80px;font-size:24px;line-height:28px;color:#2e1e0a;font-weight:bold;font-family:'Liberation Sans',sans-serif;transform:scaleX(0.7680);transform-origin:0 50%;left:83.6px;">What is your Short-term memory capacity?</span>
<div style="left:60.599999999999994px;top:211.0px;width:9px;height:9px;background:#c2ab45;"></div>
<span id="s13_l1" class="t" style="top:201.00px;font-size:24px;line-height:28px;color:#2e1e0a;font-weight:bold;font-family:'Liberation Sans',sans-serif;transform:scaleX(0.7860);transform-origin:0 50%;left:85.5px;">How did you do?</span>
<div style="left:83.3px;top:251.4px;width:9px;height:9px;background:#c2ab45;"></div>
<span id="s13_l2" class="t" style="top:241.40px;font-size:24px;line-height:28px;color:#2e1e0a;font-weight:bold;font-family:'Liberation Sans',sans-serif;transform:scaleX(0.8040);transform-origin:0 50%;left:111.0px;">6 3 9 1 4 6 8</span>
<div style="left:83.3px;top:297.4px;width:9px;height:9px;background:#c2ab45;"></div>
<span id="s13_l3" class="t" style="top:287.40px;font-size:24px;line-height:28px;color:#2e1e0a;font-weight:bold;font-family:'Liberation Sans',sans-serif;transform:scaleX(0.8900);transform-origin:0 50%;left:111.0px;">5 8 1 3 9 6 8 4 2 7</span>
<div style="left:60.599999999999994px;top:341.1px;width:9px;height:9px;background:#c2ab45;"></div>
<span id="s13_l4" class="t" style="top:331.10px;font-size:24px;line-height:28px;color:#2e1e0a;font-weight:bold;font-family:'Liberation Sans',sans-serif;transform:scaleX(0.8560);transform-origin:0 50%;left:83.6px;">We can store 7 numbers / pieces +/- 2 - The Magic</span>
<span id="s13_l5" class="t" style="top:358.50px;font-size:24px;line-height:28px;color:#2e1e0a;font-weight:bold;font-family:'Liberation Sans',sans-serif;transform:scaleX(0.7790);transform-origin:0 50%;left:87.3px;">Number Seven</span>
</div>
</div>
<span id="num14" class="t" style="top:491.00px;font-size:12px;line-height:16px;color:#808080;font-weight:bold;transform:scaleX(0.8610);transform-origin:0 50%;left:28.8px;">14</span>
<div style="left:46px;top:493px;width:137px;height:103px;box-sizing:border-box;background:#fff;border:1px solid #c4c4c4;box-shadow:1px 1px 2px rgba(0,0,0,.35);"></div>
<div style="left:47px;top:494px;width:135px;height:101px;overflow:hidden;"><div style="left:0px;top:0px;width:627px;height:470px;transform:scale(0.21531);transform-origin:0 0;"><svg style="left:0;top:0" width="627" height="470" viewBox="0 0 627 470">
<defs><pattern id="bph5" width="16" height="14" patternUnits="userSpaceOnUse" patternTransform="translate(3 0)"><ellipse cx="8" cy="7" rx="5.300" ry="4.200" fill="#69512f" stroke="#49341c" stroke-width="1.100" stroke-dasharray="1.800 .8"/><path d="M0 4.500L2.300 7L0 9.500M16 4.500L13.700 7L16 9.500" fill="none" stroke="#49341c" stroke-width="1.100"/><rect x="-.8" y="6.200" width="1.600" height="1.600" fill="#8a6e48"/><rect x="15.200" y="6.200" width="1.600" height="1.600" fill="#8a6e48"/><path d="M0 1.500h16M0 12.500h16" stroke="#5a4128" stroke-width=".8" stroke-dasharray="2 2"/></pattern>
<pattern id="bpv5" width="16" height="14" patternUnits="userSpaceOnUse" patternTransform="rotate(90) translate(3 0)"><ellipse cx="8" cy="7" rx="5.300" ry="4.200" fill="#69512f" stroke="#49341c" stroke-width="1.100" stroke-dasharray="1.800 .8"/><path d="M0 4.500L2.300 7L0 9.500M16 4.500L13.700 7L16 9.500" fill="none" stroke="#49341c" stroke-width="1.100"/><rect x="-.8" y="6.200" width="1.600" height="1.600" fill="#8a6e48"/><rect x="15.200" y="6.200" width="1.600" height="1.600" fill="#8a6e48"/><path d="M0 1.500h16M0 12.500h16" stroke="#5a4128" stroke-width=".8" stroke-dasharray="2 2"/></pattern></defs>
<rect width="627" height="470" fill="#5f472b"/>
<rect x="14" y="0" width="599" height="14" fill="url(#bph5)"/><g transform="translate(0 455)"><rect x="14" y="0" width="599" height="14" fill="url(#bph5)"/></g>
<g transform="translate(14 0)"><rect x="-14" y="14" width="14" height="442" fill="url(#bpv5)"/></g><g transform="translate(627 0)"><rect x="-14" y="14" width="14" height="442" fill="url(#bpv5)"/></g>
<rect x=".5" y=".5" width="626" height="469" fill="none" stroke="#574330" stroke-width="1"/>
<rect x="15.6" y="15.700000000000001" width="595.7" height="436.2" fill="none" stroke="#3f2c18" stroke-width="5.200" stroke-linecap="round" stroke-dasharray="0 4" opacity=".45"/>
<rect x="15.799999999999999" y="15.9" width="595.3" height="435.6" fill="#d8cb80" stroke="#d8cb80" stroke-width="4.400" stroke-linecap="round" stroke-dasharray="0 4"/>
<rect x="15.5" y="15.600000000000001" width="595.9" height="436.2" fill="none" stroke="#e0d186" stroke-width="1.600"/>
<rect x="17.5" y="17.4" width="591.8000000000001" height="432.50000000000006" fill="#eadc94" stroke="#d6c572" stroke-width="1"/>
</svg>
<div style="left:18.3px;top:18.2px;width:590.2px;height:430.90000000000003px;background:#f0e6aa;box-shadow:inset 0 0 6px 1px #ebdc90;"></div>
<div style="left:29.0px;top:28.0px;width:569.7px;height:411.90000000000003px;background:#f3f3f2;box-shadow:inset 0 0 26px 3px #f0e8b4;"></div>
<svg style="left:0;top:0" width="627" height="470" viewBox="0 0 627 470">
<path d="M86 28.4H541" stroke="#d2cb9e" stroke-width="3.6" fill="none"/>
<path d="M29.3 86V439.5H598.4V86" stroke="#d2cb9e" stroke-width="3.6" fill="none"/>
<path d="M30 124.500H598" stroke="#bebc94" stroke-width="6.500"/><path d="M30 122.500H598.4" stroke="#c9cab0" stroke-width="1.600"/><path d="M30 124.500H598.4" stroke="#e3e4d2" stroke-width="1.400"/><path d="M30 126H598.4" stroke="#fbfbf8" stroke-width="1"/>
<g fill="none" stroke="#c4c2ae" stroke-width="1.600" opacity=".7">
<ellipse cx="79.500" cy="44.500" rx="5.800" ry="12"/><ellipse cx="69.500" cy="46" rx="5.500" ry="14" transform="rotate(12 69.500 46)"/>
<ellipse cx="45" cy="79" rx="12" ry="5.800"/><ellipse cx="47" cy="69" rx="14" ry="5.500" transform="rotate(-12 47 69)"/>
<path d="M29 30C40 26 55 30 58 47M29 30C26 42 30 56 47 59M86 28.500C76 30 73 40 73 44M29.500 86C31 76 41 73 45 73M52.500 42V72M43 52H72M39.500 122C38 102 40 86 45.500 75"/></g>
<g transform="translate(627 0) scale(-1 1)"><g fill="none" stroke="#c4c2ae" stroke-width="1.600" opacity=".7">
<ellipse cx="79.500" cy="44.500" rx="5.800" ry="12"/><ellipse cx="69.500" cy="46" rx="5.500" ry="14" transform="rotate(12 69.500 46)"/>
<ellipse cx="45" cy="79" rx="12" ry="5.800"/><ellipse cx="47" cy="69" rx="14" ry="5.500" transform="rotate(-12 47 69)"/>
<path d="M29 30C40 26 55 30 58 47M29 30C26 42 30 56 47 59M86 28.500C76 30 73 40 73 44M29.500 86C31 76 41 73 45 73M52.500 42V72M43 52H72M39.500 122C38 102 40 86 45.500 75"/></g></g>
</svg>
<span id="s14_title" class="t" style="top:53.10px;font-size:42px;line-height:48px;color:#a4524a;font-family:'Liberation Sans',sans-serif;letter-spacing:-0.318px;left:132.8px;">Long-Term Memory</span>
<div style="left:55.9px;top:238.4px;width:9px;height:9px;background:#c2ab45;"></div>
<span id="s14_l0" class="t" style="top:228.40px;font-size:24px;line-height:28px;color:#2e1e0a;font-weight:bold;font-family:'Liberation Sans',sans-serif;transform:scaleX(0.8020);transform-origin:0 50%;left:83.6px;">Stores all the information you need in a somewhat</span>
<span id="s14_l1" class="t" style="top:252.10px;font-size:24px;line-height:28px;color:#2e1e0a;font-weight:bold;font-family:'Liberation Sans',sans-serif;transform:scaleX(0.7700);transform-origin:0 50%;left:83.6px;">systematic way.</span>
</div>
</div>
<svg style="left:24px;top:339px" width="16" height="11" viewBox="0 0 16 11"><path d="M10.500 .8L15.200 5.500L10.500 10.200L5.800 5.500Z" fill="#5b6fe0" stroke="#2a2f7a" stroke-width=".9"/><path d="M1.500 3h3M.5 5.500h4M1.500 8h3" stroke="#555" stroke-width="1" stroke-dasharray="1.500 1"/></svg>
</div>
<div style="left:196px;top:142px;width:16px;height:576px;background:#f0f0f0;"></div>
<div style="left:196px;top:265px;width:16px;height:55px;background:#cdcdcd;"></div>
<svg style="left:199px;top:148px" width="9" height="6" viewBox="0 0 9 6"><path d="M1 5l3.500-3.500L8 5" stroke="#505050" stroke-width="1.800" fill="none"/></svg>
<svg style="left:199px;top:707px" width="9" height="6" viewBox="0 0 9 6"><path d="M1 1l3.500 3.500L8 1" stroke="#505050" stroke-width="1.800" fill="none"/></svg>
<div style="left:218px;top:410px;width:2px;height:1px;background:#7a7a7a;"></div>
<div style="left:218px;top:411px;width:1px;height:1px;background:#9a9a9a;"></div>
<div style="left:218px;top:414px;width:2px;height:1px;background:#7a7a7a;"></div>
<div style="left:218px;top:415px;width:1px;height:1px;background:#9a9a9a;"></div>
<div style="left:218px;top:418px;width:2px;height:1px;background:#7a7a7a;"></div>
<div style="left:218px;top:419px;width:1px;height:1px;background:#9a9a9a;"></div>
<div style="left:218px;top:422px;width:2px;height:1px;background:#7a7a7a;"></div>
<div style="left:218px;top:423px;width:1px;height:1px;background:#9a9a9a;"></div>
<div style="left:218px;top:426px;width:2px;height:1px;background:#7a7a7a;"></div>
<div style="left:218px;top:427px;width:1px;height:1px;background:#9a9a9a;"></div>
<svg style="left:217px;top:401px" width="4" height="5" viewBox="0 0 4 5"><path d="M3.500 0V5L0 2.500Z" fill="#555"/></svg>
<svg style="left:217px;top:431px" width="4" height="5" viewBox="0 0 4 5"><path d="M3.500 0V5L0 2.500Z" fill="#555"/></svg>
<!-- main_panel -->
<div style="left:223px;top:116px;width:666px;height:605px;box-sizing:border-box;background:#f0f0f0;border:1px solid #9a9a9a;border-bottom-color:#e6e6e6;border-left-color:#6e6e6e;border-right-color:#dedede;"></div>
<div style="left:222px;top:117px;width:1px;height:604px;background:#a8a8a8;"></div>
<div style="left:223px;top:115px;width:666px;height:1px;background:#cdcdcd;"></div>
<div style="left:223px;top:116px;width:666px;height:1px;background:#747474;"></div>
<div style="left:224px;top:117px;width:664px;height:29px;background:#f0f0f0;"></div>
<div style="left:279px;top:124px;width:47px;height:20px;box-sizing:border-box;background:linear-gradient(#f3f3f3,#e6e6e6);border:1px solid #b4b4b4;border-bottom:none;"></div>
<span id="tab_Outline" class="t" style="top:126.00px;font-size:12px;line-height:16px;color:#000;letter-spacing:-0.033px;left:282px;">Outline</span>
<div style="left:326px;top:124px;width:38px;height:20px;box-sizing:border-box;background:linear-gradient(#f3f3f3,#e6e6e6);border:1px solid #b4b4b4;border-bottom:none;"></div>
<span id="tab_Notes" class="t" style="top:126.00px;font-size:12px;line-height:16px;color:#000;letter-spacing:-0.332px;left:329px;">Notes</span>
<div style="left:364px;top:124px;width:54px;height:20px;box-sizing:border-box;background:linear-gradient(#f3f3f3,#e6e6e6);border:1px solid #b4b4b4;border-bottom:none;"></div>
<span id="tab_Handout" class="t" style="top:126.00px;font-size:12px;line-height:16px;color:#000;letter-spacing:0.161px;left:366px;">Handout</span>
<div style="left:418px;top:124px;width:72px;height:20px;box-sizing:border-box;background:linear-gradient(#f3f3f3,#e6e6e6);border:1px solid #b4b4b4;border-bottom:none;"></div>
<span id="tab_Slide_Sorter" class="t" style="top:126.00px;font-size:12px;line-height:16px;color:#000;letter-spacing:-0.375px;left:424px;">Slide Sorter</span>
<div style="left:229px;top:121px;width:51px;height:25px;box-sizing:border-box;background:#fff;border:1px solid #b4b4b4;border-bottom:none;"></div>
<span id="tab_Normal" class="t" style="top:125.00px;font-size:12px;line-height:16px;color:#000;font-weight:bold;letter-spacing:-0.191px;left:232px;">Normal</span>
<div style="left:224px;top:146px;width:648px;height:558px;background:#ababab;"></div>
<div style="left:872px;top:146px;width:16px;height:558px;background:#f0f0f0;"></div>
<div style="left:873px;top:270px;width:14px;height:309px;background:#cdcdcd;"></div>
<svg style="left:876px;top:152px" width="9" height="6" viewBox="0 0 9 6"><path d="M1 5l3.500-3.500L8 5" stroke="#505050" stroke-width="1.800" fill="none"/></svg>
<svg style="left:876px;top:693px" width="9" height="6" viewBox="0 0 9 6"><path d="M1 1l3.500 3.500L8 1" stroke="#505050" stroke-width="1.800" fill="none"/></svg>
<div style="left:224px;top:704px;width:648px;height:16px;background:#f0f0f0;"></div>
<div style="left:872px;top:704px;width:16px;height:16px;background:#f0f0f0;"></div>
<div style="left:442px;top:705px;width:211px;height:14px;background:#cdcdcd;"></div>
<svg style="left:228px;top:708px" width="6" height="9" viewBox="0 0 6 9"><path d="M5 1L1.500 4.500L5 8" stroke="#505050" stroke-width="1.800" fill="none"/></svg>
<svg style="left:860px;top:708px" width="6" height="9" viewBox="0 0 6 9"><path d="M1 1L4.500 4.500L1 8" stroke="#505050" stroke-width="1.800" fill="none"/></svg>
<div style="left:234px;top:190px;width:627px;height:470px;box-shadow:1px 2px 4px rgba(0,0,0,.45);overflow:hidden;"><svg style="left:0;top:0" width="627" height="470" viewBox="0 0 627 470">
<defs><pattern id="bph6" width="16" height="14" patternUnits="userSpaceOnUse" patternTransform="translate(3 0)"><ellipse cx="8" cy="7" rx="5.300" ry="4.200" fill="#69512f" stroke="#49341c" stroke-width="1.100" stroke-dasharray="1.800 .8"/><path d="M0 4.500L2.300 7L0 9.500M16 4.500L13.700 7L16 9.500" fill="none" stroke="#49341c" stroke-width="1.100"/><rect x="-.8" y="6.200" width="1.600" height="1.600" fill="#8a6e48"/><rect x="15.200" y="6.200" width="1.600" height="1.600" fill="#8a6e48"/><path d="M0 1.500h16M0 12.500h16" stroke="#5a4128" stroke-width=".8" stroke-dasharray="2 2"/></pattern>
<pattern id="bpv6" width="16" height="14" patternUnits="userSpaceOnUse" patternTransform="rotate(90) translate(3 0)"><ellipse cx="8" cy="7" rx="5.300" ry="4.200" fill="#69512f" stroke="#49341c" stroke-width="1.100" stroke-dasharray="1.800 .8"/><path d="M0 4.500L2.300 7L0 9.500M16 4.500L13.700 7L16 9.500" fill="none" stroke="#49341c" stroke-width="1.100"/><rect x="-.8" y="6.200" width="1.600" height="1.600" fill="#8a6e48"/><rect x="15.200" y="6.200" width="1.600" height="1.600" fill="#8a6e48"/><path d="M0 1.500h16M0 12.500h16" stroke="#5a4128" stroke-width=".8" stroke-dasharray="2 2"/></pattern></defs>
<rect width="627" height="470" fill="#5f472b"/>
<rect x="14" y="0" width="599" height="14" fill="url(#bph6)"/><g transform="translate(0 455)"><rect x="14" y="0" width="599" height="14" fill="url(#bph6)"/></g>
<g transform="translate(14 0)"><rect x="-14" y="14" width="14" height="442" fill="url(#bpv6)"/></g><g transform="translate(627 0)"><rect x="-14" y="14" width="14" height="442" fill="url(#bpv6)"/></g>
<rect x=".5" y=".5" width="626" height="469" fill="none" stroke="#574330" stroke-width="1"/>
<rect x="15.6" y="15.700000000000001" width="595.7" height="436.2" fill="none" stroke="#3f2c18" stroke-width="5.200" stroke-linecap="round" stroke-dasharray="0 4" opacity=".45"/>
<rect x="15.799999999999999" y="15.9" width="595.3" height="435.6" fill="#d8cb80" stroke="#d8cb80" stroke-width="4.400" stroke-linecap="round" stroke-dasharray="0 4"/>
<rect x="15.5" y="15.600000000000001" width="595.9" height="436.2" fill="none" stroke="#e0d186" stroke-width="1.600"/>
<rect x="17.5" y="17.4" width="591.8000000000001" height="432.50000000000006" fill="#eadc94" stroke="#d6c572" stroke-width="1"/>
</svg>
<div style="left:18.3px;top:18.2px;width:590.2px;height:430.90000000000003px;background:#f0e6aa;box-shadow:inset 0 0 6px 1px #ebdc90;"></div>
<div style="left:29.0px;top:28.0px;width:569.7px;height:411.90000000000003px;background:radial-gradient(circle at 0 0, rgba(240,230,168,0.7) 0, rgba(240,230,168,0.39) 28px, rgba(240,230,168,0) 74px),radial-gradient(circle at 100% 0, rgba(240,230,168,0.7) 0, rgba(240,230,168,0.39) 28px, rgba(240,230,168,0) 74px),radial-gradient(circle at 0 100%, rgba(240,230,168,0.4) 0, rgba(240,230,168,0.22) 28px, rgba(240,230,168,0) 55px),radial-gradient(circle at 100% 100%, rgba(240,230,168,0.4) 0, rgba(240,230,168,0.22) 28px, rgba(240,230,168,0) 55px),#f3f3f3;box-shadow:inset 0 0 46px 9px #f0e6ae;"></div>
<svg style="left:0;top:0" width="627" height="470" viewBox="0 0 627 470">
<path d="M86 28.4H541" stroke="#d2cb9e" stroke-width="1.3" fill="none"/>
<path d="M29.3 86V439.5H598.4V86" stroke="#d2cb9e" stroke-width="1.3" fill="none"/>
<path d="M30 122.500H598.4" stroke="#c9cab0" stroke-width="1.600"/><path d="M30 124.500H598.4" stroke="#e3e4d2" stroke-width="1.400"/><path d="M30 126H598.4" stroke="#fbfbf8" stroke-width="1"/>
<g fill="none" stroke="#c8c6b4" stroke-width=".9" opacity=".75"><path d="M28.9 30.1C29.9 29.8 32.8 28.6 35.0 28.3C37.3 27.9 39.9 27.7 42.4 28.0C44.8 28.2 47.6 28.8 49.8 29.8C51.9 30.9 53.9 32.5 55.3 34.4C56.6 36.3 57.6 39.0 58.0 41.2C58.5 43.3 58.0 46.3 58.0 47.3"/><path d="M28.9 30.1C28.6 31.1 27.4 34.0 27.1 36.2C26.7 38.5 26.5 41.1 26.8 43.6C27.0 46.0 27.6 48.8 28.6 51.0C29.7 53.1 31.3 55.1 33.2 56.5C35.1 57.8 37.8 58.8 40.0 59.2C42.1 59.7 45.1 59.2 46.1 59.2"/><path d="M34.4 34.4C35.5 34.2 38.8 33.0 41.2 33.2C43.5 33.4 46.6 34.3 48.5 35.6C50.4 37.0 51.8 39.2 52.5 41.2C53.2 43.1 52.8 46.3 52.8 47.3"/><path d="M33.2 35.6C33.0 36.7 31.8 40.0 32.0 42.4C32.2 44.7 33.1 47.8 34.4 49.7C35.8 51.6 38.0 53.0 40.0 53.7C41.9 54.4 45.1 54.0 46.1 54.0"/><path d="M31.7 32.3C32.7 32.0 35.8 30.8 38.1 30.7C40.4 30.6 43.2 30.9 45.5 31.7C47.7 32.4 50.0 33.7 51.6 35.3C53.2 37.0 54.6 39.8 55.3 41.8C55.9 43.8 55.4 46.4 55.4 47.3"/><path d="M31.1 32.9C30.8 33.9 29.6 37.0 29.5 39.3C29.4 41.6 29.7 44.4 30.5 46.7C31.2 48.9 32.5 51.2 34.1 52.8C35.8 54.4 38.6 55.8 40.6 56.5C42.6 57.1 45.2 56.6 46.1 56.6"/><path d="M85.6 44.6C85.4 45.6 85.0 49.0 84.4 50.7C83.8 52.4 82.9 54.1 82.0 55.0C81.0 56.0 79.9 56.5 78.9 56.5C78.0 56.4 76.9 55.7 76.1 54.6C75.4 53.5 74.7 51.8 74.3 50.0C74.0 48.2 73.8 45.9 74.0 43.8C74.1 41.8 74.6 39.5 75.2 37.8C75.8 36.0 76.7 34.4 77.6 33.4C78.5 32.5 79.7 31.9 80.6 32.0C81.6 32.1 82.7 32.8 83.4 33.8C84.2 34.9 84.9 36.7 85.3 38.5C85.6 40.3 85.5 43.6 85.6 44.6"/><path d="M43.4 86.8C44.4 86.6 47.8 86.2 49.5 85.6C51.2 85.0 52.9 84.1 53.8 83.2C54.8 82.2 55.3 81.1 55.3 80.1C55.2 79.2 54.5 78.1 53.4 77.3C52.3 76.6 50.6 75.9 48.8 75.5C47.0 75.2 44.7 75.0 42.6 75.2C40.6 75.3 38.3 75.8 36.6 76.4C34.8 77.0 33.2 77.9 32.2 78.8C31.3 79.7 30.7 80.9 30.8 81.8C30.9 82.8 31.6 83.9 32.6 84.6C33.7 85.4 35.5 86.1 37.3 86.5C39.1 86.8 42.4 86.7 43.4 86.8"/><path d="M74.5 47.2C74.1 48.3 73.2 52.0 72.3 53.8C71.5 55.7 70.4 57.5 69.4 58.5C68.4 59.4 67.3 59.9 66.5 59.7C65.6 59.6 64.8 58.7 64.3 57.4C63.8 56.1 63.5 54.0 63.5 52.0C63.5 49.9 63.8 47.3 64.3 45.0C64.8 42.7 65.6 40.2 66.4 38.3C67.3 36.4 68.4 34.7 69.3 33.7C70.3 32.7 71.4 32.2 72.3 32.4C73.1 32.6 73.9 33.5 74.4 34.8C74.9 36.1 75.2 38.1 75.2 40.2C75.2 42.2 74.6 46.0 74.5 47.2"/><path d="M46.0 75.7C47.1 75.3 50.8 74.4 52.6 73.5C54.5 72.7 56.3 71.6 57.3 70.6C58.2 69.6 58.7 68.5 58.5 67.7C58.4 66.8 57.5 66.0 56.2 65.5C54.9 65.0 52.8 64.7 50.8 64.7C48.7 64.7 46.1 65.0 43.8 65.5C41.5 66.0 39.0 66.8 37.1 67.6C35.2 68.5 33.5 69.6 32.5 70.5C31.5 71.5 31.0 72.6 31.2 73.5C31.4 74.3 32.3 75.1 33.6 75.6C34.9 76.1 36.9 76.4 39.0 76.4C41.0 76.4 44.8 75.8 46.0 75.7"/><path d="M71.2 57.4C71.1 57.8 70.8 59.1 70.3 59.6C69.8 60.1 68.9 60.5 68.1 60.5C67.4 60.5 66.5 60.1 66.0 59.6C65.5 59.1 65.1 58.1 65.1 57.4C65.1 56.7 65.5 55.8 66.0 55.2C66.5 54.7 67.4 54.3 68.1 54.3C68.9 54.3 69.8 54.7 70.3 55.2C70.8 55.8 71.1 57.1 71.2 57.4"/><path d="M65.1 64.5C64.9 64.8 64.7 66.0 64.3 66.4C63.8 66.9 63.0 67.2 62.3 67.2C61.7 67.2 60.8 66.9 60.4 66.4C59.9 66.0 59.6 65.1 59.6 64.5C59.6 63.8 59.9 63.0 60.4 62.5C60.8 62.1 61.7 61.7 62.3 61.7C63.0 61.7 63.8 62.1 64.3 62.5C64.7 63.0 64.9 64.1 65.1 64.5"/><path d="M59.9 70.6C59.7 70.9 59.5 72.1 59.1 72.5C58.6 73.0 57.8 73.4 57.1 73.4C56.5 73.4 55.6 73.0 55.2 72.5C54.7 72.1 54.3 71.2 54.3 70.6C54.3 69.9 54.7 69.1 55.2 68.6C55.6 68.2 56.5 67.8 57.1 67.8C57.8 67.8 58.6 68.2 59.1 68.6C59.5 69.1 59.7 70.3 59.9 70.6"/><path d="M86.0 28.6C85.3 28.8 83.2 29.0 81.6 29.8C80.1 30.7 78.0 32.1 76.7 33.8C75.5 35.5 74.6 38.2 74.0 39.9C73.4 41.7 73.2 43.5 73.0 44.2"/><path d="M27.4 87.2C27.6 86.5 27.8 84.4 28.6 82.8C29.5 81.3 30.9 79.2 32.6 77.9C34.3 76.7 37.0 75.8 38.7 75.2C40.5 74.6 42.3 74.4 43.0 74.2"/><path d="M100.6 37.2C99.6 37.0 96.6 36.3 94.5 36.3C92.5 36.3 90.6 36.6 88.4 37.2C86.1 37.7 83.6 38.7 81.0 39.6C78.5 40.6 75.8 41.9 73.0 43.0C70.3 44.1 66.9 45.4 64.5 46.1C62.0 46.8 60.3 47.1 58.3 47.3C56.4 47.5 53.7 47.3 52.8 47.3"/><path d="M36.0 101.8C35.8 100.8 35.1 97.8 35.1 95.7C35.1 93.7 35.4 91.8 36.0 89.6C36.5 87.3 37.5 84.8 38.4 82.2C39.4 79.7 40.7 77.0 41.8 74.2C42.9 71.5 44.2 68.1 44.9 65.7C45.6 63.2 45.9 61.5 46.1 59.5C46.3 57.6 46.1 54.9 46.1 54.0"/><path d="M52.8 42.4C52.8 47.3 52.8 66.9 52.8 71.8"/><path d="M41.2 54.0C46.1 54.0 65.7 54.0 70.6 54.0"/><path d="M57.7 42.4C57.7 46.5 57.7 62.8 57.7 66.9"/><path d="M41.2 58.9C45.3 58.9 61.6 58.9 65.7 58.9"/><path d="M39.500 122C38 102 40 86 45.500 75"/></g>
<g transform="translate(627 0) scale(-1 1)"><g fill="none" stroke="#c8c6b4" stroke-width=".9" opacity=".75"><path d="M28.9 30.1C29.9 29.8 32.8 28.6 35.0 28.3C37.3 27.9 39.9 27.7 42.4 28.0C44.8 28.2 47.6 28.8 49.8 29.8C51.9 30.9 53.9 32.5 55.3 34.4C56.6 36.3 57.6 39.0 58.0 41.2C58.5 43.3 58.0 46.3 58.0 47.3"/><path d="M28.9 30.1C28.6 31.1 27.4 34.0 27.1 36.2C26.7 38.5 26.5 41.1 26.8 43.6C27.0 46.0 27.6 48.8 28.6 51.0C29.7 53.1 31.3 55.1 33.2 56.5C35.1 57.8 37.8 58.8 40.0 59.2C42.1 59.7 45.1 59.2 46.1 59.2"/><path d="M34.4 34.4C35.5 34.2 38.8 33.0 41.2 33.2C43.5 33.4 46.6 34.3 48.5 35.6C50.4 37.0 51.8 39.2 52.5 41.2C53.2 43.1 52.8 46.3 52.8 47.3"/><path d="M33.2 35.6C33.0 36.7 31.8 40.0 32.0 42.4C32.2 44.7 33.1 47.8 34.4 49.7C35.8 51.6 38.0 53.0 40.0 53.7C41.9 54.4 45.1 54.0 46.1 54.0"/><path d="M31.7 32.3C32.7 32.0 35.8 30.8 38.1 30.7C40.4 30.6 43.2 30.9 45.5 31.7C47.7 32.4 50.0 33.7 51.6 35.3C53.2 37.0 54.6 39.8 55.3 41.8C55.9 43.8 55.4 46.4 55.4 47.3"/><path d="M31.1 32.9C30.8 33.9 29.6 37.0 29.5 39.3C29.4 41.6 29.7 44.4 30.5 46.7C31.2 48.9 32.5 51.2 34.1 52.8C35.8 54.4 38.6 55.8 40.6 56.5C42.6 57.1 45.2 56.6 46.1 56.6"/><path d="M85.6 44.6C85.4 45.6 85.0 49.0 84.4 50.7C83.8 52.4 82.9 54.1 82.0 55.0C81.0 56.0 79.9 56.5 78.9 56.5C78.0 56.4 76.9 55.7 76.1 54.6C75.4 53.5 74.7 51.8 74.3 50.0C74.0 48.2 73.8 45.9 74.0 43.8C74.1 41.8 74.6 39.5 75.2 37.8C75.8 36.0 76.7 34.4 77.6 33.4C78.5 32.5 79.7 31.9 80.6 32.0C81.6 32.1 82.7 32.8 83.4 33.8C84.2 34.9 84.9 36.7 85.3 38.5C85.6 40.3 85.5 43.6 85.6 44.6"/><path d="M43.4 86.8C44.4 86.6 47.8 86.2 49.5 85.6C51.2 85.0 52.9 84.1 53.8 83.2C54.8 82.2 55.3 81.1 55.3 80.1C55.2 79.2 54.5 78.1 53.4 77.3C52.3 76.6 50.6 75.9 48.8 75.5C47.0 75.2 44.7 75.0 42.6 75.2C40.6 75.3 38.3 75.8 36.6 76.4C34.8 77.0 33.2 77.9 32.2 78.8C31.3 79.7 30.7 80.9 30.8 81.8C30.9 82.8 31.6 83.9 32.6 84.6C33.7 85.4 35.5 86.1 37.3 86.5C39.1 86.8 42.4 86.7 43.4 86.8"/><path d="M74.5 47.2C74.1 48.3 73.2 52.0 72.3 53.8C71.5 55.7 70.4 57.5 69.4 58.5C68.4 59.4 67.3 59.9 66.5 59.7C65.6 59.6 64.8 58.7 64.3 57.4C63.8 56.1 63.5 54.0 63.5 52.0C63.5 49.9 63.8 47.3 64.3 45.0C64.8 42.7 65.6 40.2 66.4 38.3C67.3 36.4 68.4 34.7 69.3 33.7C70.3 32.7 71.4 32.2 72.3 32.4C73.1 32.6 73.9 33.5 74.4 34.8C74.9 36.1 75.2 38.1 75.2 40.2C75.2 42.2 74.6 46.0 74.5 47.2"/><path d="M46.0 75.7C47.1 75.3 50.8 74.4 52.6 73.5C54.5 72.7 56.3 71.6 57.3 70.6C58.2 69.6 58.7 68.5 58.5 67.7C58.4 66.8 57.5 66.0 56.2 65.5C54.9 65.0 52.8 64.7 50.8 64.7C48.7 64.7 46.1 65.0 43.8 65.5C41.5 66.0 39.0 66.8 37.1 67.6C35.2 68.5 33.5 69.6 32.5 70.5C31.5 71.5 31.0 72.6 31.2 73.5C31.4 74.3 32.3 75.1 33.6 75.6C34.9 76.1 36.9 76.4 39.0 76.4C41.0 76.4 44.8 75.8 46.0 75.7"/><path d="M71.2 57.4C71.1 57.8 70.8 59.1 70.3 59.6C69.8 60.1 68.9 60.5 68.1 60.5C67.4 60.5 66.5 60.1 66.0 59.6C65.5 59.1 65.1 58.1 65.1 57.4C65.1 56.7 65.5 55.8 66.0 55.2C66.5 54.7 67.4 54.3 68.1 54.3C68.9 54.3 69.8 54.7 70.3 55.2C70.8 55.8 71.1 57.1 71.2 57.4"/><path d="M65.1 64.5C64.9 64.8 64.7 66.0 64.3 66.4C63.8 66.9 63.0 67.2 62.3 67.2C61.7 67.2 60.8 66.9 60.4 66.4C59.9 66.0 59.6 65.1 59.6 64.5C59.6 63.8 59.9 63.0 60.4 62.5C60.8 62.1 61.7 61.7 62.3 61.7C63.0 61.7 63.8 62.1 64.3 62.5C64.7 63.0 64.9 64.1 65.1 64.5"/><path d="M59.9 70.6C59.7 70.9 59.5 72.1 59.1 72.5C58.6 73.0 57.8 73.4 57.1 73.4C56.5 73.4 55.6 73.0 55.2 72.5C54.7 72.1 54.3 71.2 54.3 70.6C54.3 69.9 54.7 69.1 55.2 68.6C55.6 68.2 56.5 67.8 57.1 67.8C57.8 67.8 58.6 68.2 59.1 68.6C59.5 69.1 59.7 70.3 59.9 70.6"/><path d="M86.0 28.6C85.3 28.8 83.2 29.0 81.6 29.8C80.1 30.7 78.0 32.1 76.7 33.8C75.5 35.5 74.6 38.2 74.0 39.9C73.4 41.7 73.2 43.5 73.0 44.2"/><path d="M27.4 87.2C27.6 86.5 27.8 84.4 28.6 82.8C29.5 81.3 30.9 79.2 32.6 77.9C34.3 76.7 37.0 75.8 38.7 75.2C40.5 74.6 42.3 74.4 43.0 74.2"/><path d="M100.6 37.2C99.6 37.0 96.6 36.3 94.5 36.3C92.5 36.3 90.6 36.6 88.4 37.2C86.1 37.7 83.6 38.7 81.0 39.6C78.5 40.6 75.8 41.9 73.0 43.0C70.3 44.1 66.9 45.4 64.5 46.1C62.0 46.8 60.3 47.1 58.3 47.3C56.4 47.5 53.7 47.3 52.8 47.3"/><path d="M36.0 101.8C35.8 100.8 35.1 97.8 35.1 95.7C35.1 93.7 35.4 91.8 36.0 89.6C36.5 87.3 37.5 84.8 38.4 82.2C39.4 79.7 40.7 77.0 41.8 74.2C42.9 71.5 44.2 68.1 44.9 65.7C45.6 63.2 45.9 61.5 46.1 59.5C46.3 57.6 46.1 54.9 46.1 54.0"/><path d="M52.8 42.4C52.8 47.3 52.8 66.9 52.8 71.8"/><path d="M41.2 54.0C46.1 54.0 65.7 54.0 70.6 54.0"/><path d="M57.7 42.4C57.7 46.5 57.7 62.8 57.7 66.9"/><path d="M41.2 58.9C45.3 58.9 61.6 58.9 65.7 58.9"/><path d="M39.500 122C38 102 40 86 45.500 75"/></g></g>
</svg>
<span id="s_title" class="t" style="top:54.50px;font-size:38.5px;line-height:46px;color:#9c5640;font-family:'DejaVu Sans','Liberation Sans',sans-serif;letter-spacing:0.463px;left:312.2px;transform:translateX(-50%);">A model of Memory</span>
<div style="left:148px;top:249px;width:61px;height:62px;background:#4b0082;border-radius:10px;"></div>
<div style="left:295px;top:242.5px;width:78.7px;height:74px;background:#ff950e;"></div>
<div style="left:462px;top:233px;width:98px;height:93px;background:#008000;border-radius:11px;"></div>
<div style="left:128.7px;top:266.6px;width:101.25px;height:27px;font-weight:bold;color:#fff;text-align:center;letter-spacing:1.250px;font-size:10.500px;line-height:13.200px;white-space:nowrap;-webkit-text-stroke:.35px #fff;text-shadow:1px 1px 0 rgba(0,0,0,.85),0 0 1px rgba(0,0,0,.5);">Sensory<br>memory</div>
<div style="left:284.20000000000005px;top:266.6px;width:101.25px;height:27px;font-weight:bold;color:#fff;text-align:center;letter-spacing:1.250px;font-size:10.500px;line-height:13.200px;white-space:nowrap;-webkit-text-stroke:.35px #fff;text-shadow:1px 1px 0 rgba(0,0,0,.85),0 0 1px rgba(0,0,0,.5);"><span style="letter-spacing:.95px">Short-term</span><br>memory</div>
<div style="left:461.5px;top:266.6px;width:101.25px;height:27px;font-weight:bold;color:#fff;text-align:center;letter-spacing:1.250px;font-size:10.500px;line-height:13.200px;white-space:nowrap;-webkit-text-stroke:.35px #fff;text-shadow:1px 1px 0 rgba(0,0,0,.85),0 0 1px rgba(0,0,0,.5);"><span style="letter-spacing:1.050px">Long-term</span><br>memory</div>
<svg style="left:0;top:0" width="627" height="470" viewBox="0 0 627 470"><path d="M56.5 276.7H126.5V281.3H56.5Z" fill="#000"/><path d="M137 279L122 271.5L126.5 279L122 286.5Z" fill="#000"/><path d="M211 277.4H274.0V282.0H211Z" fill="#000"/><path d="M284.5 279.7L269.5 272.2L274.0 279.7L269.5 287.2Z" fill="#000"/><path d="M377.5 260.2H447.0V264.8H377.5Z" fill="#000"/><path d="M457.5 262.5L442.5 255.0L447.0 262.5L442.5 270.0Z" fill="#000"/><path d="M458.70000000000005 296.5H396.0V301.1H458.70000000000005Z" fill="#000"/><path d="M385.5 298.8L400.5 291.3L396.0 298.8L400.5 306.3Z" fill="#000"/><path d="M326.4 215.6L319.4 232.8L323.5 234.5L330.6 217.4Z" fill="#000"/><path d="M318.2 241.5L316.8 227.9L321.4 233.6L328.8 232.9Z" fill="#000"/><path d="M359.8 240.6L353.2 225.8L349.1 227.7L355.8 242.4Z" fill="#000"/><path d="M347.6 219.0L358.5 227.2L351.1 226.7L346.6 232.6Z" fill="#000"/></svg>
<span id="s_Sensory_Input" class="t" style="top:243.10px;font-size:15px;line-height:18px;color:#5a4c2a;font-style:italic;font-family:'Liberation Serif','DejaVu Serif',serif;letter-spacing:-0.177px;left:56.4px;">Sensory Input</span>
<span id="s_Attention" class="t" style="top:254.60px;font-size:15px;line-height:18px;color:#5a4c2a;font-style:italic;font-family:'Liberation Serif','DejaVu Serif',serif;letter-spacing:-0.144px;left:214.9px;">Attention</span>
<span id="s_Rehearsal" class="t" style="top:197.10px;font-size:15px;line-height:18px;color:#5a4c2a;font-style:italic;font-family:'Liberation Serif','DejaVu Serif',serif;letter-spacing:-0.081px;left:304.1px;">Rehearsal</span>
<span id="s_Storage" class="t" style="top:243.10px;font-size:15px;line-height:18px;color:#5a4c2a;font-style:italic;font-family:'Liberation Serif','DejaVu Serif',serif;letter-spacing:-0.210px;left:389.2px;">Storage</span>
<span id="s_Retrieval" class="t" style="top:300.10px;font-size:15px;line-height:18px;color:#5a4c2a;font-style:italic;font-family:'Liberation Serif','DejaVu Serif',serif;letter-spacing:-0.143px;left:402.5px;">Retrieval</span>
<svg style="left:0;top:0" width="627" height="470" viewBox="0 0 627 470"><circle cx="294.5" cy="242.3" r="4.200" fill="#c8f03c" stroke="#2d3b00" stroke-width="1"/><rect x="330.29999999999995" y="238.3" width="8" height="8" rx="1.500" fill="#3fe0e0" stroke="#0b4d57" stroke-width="1"/><rect x="369.5" y="238.3" width="8" height="8" rx="1.500" fill="#3fe0e0" stroke="#0b4d57" stroke-width="1"/><rect x="290.5" y="275.3" width="8" height="8" rx="1.500" fill="#3fe0e0" stroke="#0b4d57" stroke-width="1"/><rect x="369.5" y="275.3" width="8" height="8" rx="1.500" fill="#3fe0e0" stroke="#0b4d57" stroke-width="1"/><rect x="290.5" y="312.3" width="8" height="8" rx="1.500" fill="#3fe0e0" stroke="#0b4d57" stroke-width="1"/><rect x="330.29999999999995" y="312.3" width="8" height="8" rx="1.500" fill="#3fe0e0" stroke="#0b4d57" stroke-width="1"/><rect x="369.5" y="312.3" width="8" height="8" rx="1.500" fill="#3fe0e0" stroke="#0b4d57" stroke-width="1"/></svg>
</div>
<!-- props_panel -->
<div style="left:889px;top:117px;width:6px;height:604px;background:#fafafa;"></div>
<div style="left:895px;top:116px;width:280px;height:605px;box-sizing:border-box;background:#f0f0f0;border:1px solid #9a9a9a;border-right:none;"></div>
<div style="left:899px;top:119px;width:236px;height:599px;box-sizing:border-box;background:#efefef;border:1px solid #e2e2e2;"></div>
<div style="left:1135px;top:117px;width:1px;height:603px;background:#dcdcdc;"></div>
<span id="props_hdr" class="t" style="top:126.50px;font-size:12px;line-height:16px;color:#000;font-weight:bold;letter-spacing:-0.136px;left:909px;">Properties</span>
<svg style="left:1120px;top:127px" width="10" height="10" viewBox="0 0 10 10"><path d="M1 1L9 9M9 1L1 9" stroke="#4a4a4a" stroke-width="1.700" fill="none"/></svg>
<div style="left:899px;top:147px;width:236px;height:27px;background:linear-gradient(#dedede,#e9e9e9 45%,#efefef);"></div>
<div style="left:899px;top:173px;width:236px;height:1px;background:#e4e4e4;"></div>
<svg style="left:905px;top:156px" width="9" height="9" viewBox="0 0 9 9"><rect x=".5" y=".5" width="8" height="8" fill="#fff" stroke="#6e6e6e"/><path d="M2 4.500h5M4.500 2v5" stroke="#1a1a1a" stroke-width="1"/></svg>
<span id="sec_text" class="t" style="top:153.50px;font-size:12px;line-height:16px;color:#111;font-weight:bold;letter-spacing:0.201px;left:919px;">Text</span>
<svg style="left:1118px;top:152px" width="12" height="12" viewBox="0 0 12 12"><rect x=".5" y=".5" width="11" height="10" fill="#fdfdfd" stroke="#4a79b8"/><rect x="1" y="1" width="10" height="2.500" fill="#b9d1ee"/>
<rect x="2.500" y="6.500" width="1.300" height="1.300" fill="#2d5ea3"/><rect x="5.300" y="6.500" width="1.300" height="1.300" fill="#2d5ea3"/><rect x="8.100" y="6.500" width="1.300" height="1.300" fill="#2d5ea3"/></svg>
<div style="left:899px;top:174px;width:236px;height:27px;background:linear-gradient(#dedede,#e9e9e9 45%,#efefef);"></div>
<div style="left:899px;top:200px;width:236px;height:1px;background:#e4e4e4;"></div>
<svg style="left:905px;top:183px" width="9" height="9" viewBox="0 0 9 9"><rect x=".5" y=".5" width="8" height="8" fill="#fff" stroke="#6e6e6e"/><path d="M2 4.500h5M4.500 2v5" stroke="#1a1a1a" stroke-width="1"/></svg>
<span id="sec_para" class="t" style="top:180.50px;font-size:12px;line-height:16px;color:#111;font-weight:bold;letter-spacing:-0.373px;left:919px;">Paragraph</span>
<svg style="left:1118px;top:178px" width="12" height="12" viewBox="0 0 12 12"><rect x=".5" y=".5" width="11" height="10" fill="#fdfdfd" stroke="#4a79b8"/><rect x="1" y="1" width="10" height="2.500" fill="#b9d1ee"/>
<rect x="2.500" y="6.500" width="1.300" height="1.300" fill="#2d5ea3"/><rect x="5.300" y="6.500" width="1.300" height="1.300" fill="#2d5ea3"/><rect x="8.100" y="6.500" width="1.300" height="1.300" fill="#2d5ea3"/></svg>
<div style="left:899px;top:201px;width:236px;height:27px;background:linear-gradient(#dedede,#e9e9e9 45%,#efefef);"></div>
<div style="left:899px;top:227px;width:236px;height:1px;background:#e4e4e4;"></div>
<svg style="left:905px;top:210px" width="9" height="9" viewBox="0 0 9 9"><rect x=".5" y=".5" width="8" height="8" fill="#fff" stroke="#6e6e6e"/><path d="M2 4.500h5" stroke="#1a1a1a" stroke-width="1"/></svg>
<span id="sec_area" class="t" style="top:207.50px;font-size:12px;line-height:16px;color:#111;font-weight:bold;letter-spacing:-0.472px;left:919px;">Area</span>
<svg style="left:1118px;top:206px" width="12" height="12" viewBox="0 0 12 12"><rect x=".5" y=".5" width="11" height="10" fill="#fdfdfd" stroke="#4a79b8"/><rect x="1" y="1" width="10" height="2.500" fill="#b9d1ee"/>
<rect x="2.500" y="6.500" width="1.300" height="1.300" fill="#2d5ea3"/><rect x="5.300" y="6.500" width="1.300" height="1.300" fill="#2d5ea3"/><rect x="8.100" y="6.500" width="1.300" height="1.300" fill="#2d5ea3"/></svg>
<span id="l_fill" class="t" style="top:230.00px;font-size:12px;line-height:16px;color:#000;letter-spacing:-0.298px;left:906px;"><u>F</u>ill:</span>
<div style="left:906px;top:251px;width:108px;height:23px;box-sizing:border-box;background:#fff;border:1px solid #7a7a7a;"></div>
<div style="left:996px;top:253px;width:17px;height:19px;box-sizing:border-box;background:#e4e4e4;border:1px solid #adadad;"></div>
<svg style="left:1000px;top:260px" width="9" height="6" viewBox="0 0 9 6"><path d="M1 1l3.500 3.500L8 1" stroke="#444" stroke-width="1.800" fill="none"/></svg>
<span id="p_color" class="t" style="top:255.00px;font-size:12px;line-height:16px;color:#000;letter-spacing:-0.058px;left:909px;">Color</span>
<div style="left:1021px;top:249px;width:98px;height:27px;background:#fafafa;box-shadow:0 0 0 1px #f3f3f3;"></div>
<svg style="left:1026px;top:254px" width="16" height="16" viewBox="0 0 16 16"><path d="M1.500 8l6-6 6 5.500L8 13.500z" fill="#f3f7fc" stroke="#2d5a94" stroke-width="1.100"/>
<path d="M4 2.500c1-2 4-2 4 1v4" fill="none" stroke="#2d5a94" stroke-width="1.100"/>
<path d="M12 7c2 1 3 3 2.500 6.500-1.500 0-2-2-2.500-6.500z" fill="#4f94e0" stroke="#1d4f93" stroke-width=".6"/></svg>
<div style="left:1045px;top:256px;width:56px;height:12px;box-sizing:border-box;background:#ff950e;border:1px solid #23447a;box-shadow:inset 0 0 0 1px #ffd9a6;"></div>
<svg style="left:1108px;top:260px" width="7" height="4" viewBox="0 0 7 4"><path d="M.4 0h6.200L3.500 3.600z" fill="#000"/></svg>
<span id="l_transp" class="t" style="top:282.50px;font-size:12px;line-height:16px;color:#000;letter-spacing:-0.236px;left:906px;"><u>T</u>ransparency:</span>
<div style="left:906px;top:303px;width:108px;height:23px;box-sizing:border-box;background:#fff;border:1px solid #7a7a7a;"></div>
<div style="left:996px;top:305px;width:17px;height:19px;box-sizing:border-box;background:#e4e4e4;border:1px solid #adadad;"></div>
<svg style="left:1000px;top:312px" width="9" height="6" viewBox="0 0 9 6"><path d="M1 1l3.500 3.500L8 1" stroke="#444" stroke-width="1.800" fill="none"/></svg>
<span id="p_none" class="t" style="top:307.00px;font-size:12px;line-height:16px;color:#000;letter-spacing:-0.197px;left:909px;">None</span>
<div style="left:1020px;top:303px;width:108px;height:23px;box-sizing:border-box;background:#fff;border:1px solid #ababab;"></div>
<div style="left:1110px;top:305px;width:15px;height:19px;box-sizing:border-box;background:#f0f0f0;border:1px solid #c0c0c0;"></div>
<div style="left:1110px;top:314.0px;width:15px;height:1px;background:#c0c0c0;"></div>
<svg style="left:1114px;top:308px" width="6" height="4" viewBox="0 0 6 4"><path d="M0 4h6L3 0z" fill="#000"/></svg>
<svg style="left:1114px;top:317px" width="6" height="4" viewBox="0 0 6 4"><path d="M0 0h6L3 4z" fill="#000"/></svg>
<span id="p_pct1" class="t" style="top:307.00px;font-size:12px;line-height:16px;color:#222;letter-spacing:-1.172px;left:1024px;">0%</span>
<div style="left:899px;top:335.5px;width:236px;height:27px;background:linear-gradient(#dedede,#e9e9e9 45%,#efefef);"></div>
<div style="left:899px;top:361.5px;width:236px;height:1px;background:#e4e4e4;"></div>
<svg style="left:905px;top:344px" width="9" height="9" viewBox="0 0 9 9"><rect x=".5" y=".5" width="8" height="8" fill="#fff" stroke="#6e6e6e"/><path d="M2 4.500h5" stroke="#1a1a1a" stroke-width="1"/></svg>
<span id="sec_line" class="t" style="top:342.00px;font-size:12px;line-height:16px;color:#111;font-weight:bold;letter-spacing:-0.568px;left:919px;">Line</span>
<svg style="left:1118px;top:340px" width="12" height="12" viewBox="0 0 12 12"><rect x=".5" y=".5" width="11" height="10" fill="#fdfdfd" stroke="#4a79b8"/><rect x="1" y="1" width="10" height="2.500" fill="#b9d1ee"/>
<rect x="2.500" y="6.500" width="1.300" height="1.300" fill="#2d5ea3"/><rect x="5.300" y="6.500" width="1.300" height="1.300" fill="#2d5ea3"/><rect x="8.100" y="6.500" width="1.300" height="1.300" fill="#2d5ea3"/></svg>
<span id="l_width" class="t" style="top:364.00px;font-size:12px;line-height:16px;color:#000;letter-spacing:0.114px;left:906px;"><u>W</u>idth:</span>
<span id="l_color" class="t" style="top:364.00px;font-size:12px;line-height:16px;color:#000;letter-spacing:-0.153px;left:1020px;"><u>C</u>olor:</span>
<div style="left:907px;top:381px;width:98px;height:27px;background:#fafafa;box-shadow:0 0 0 1px #f3f3f3;"></div>
<div style="left:911px;top:393px;width:76px;height:1px;background:#000;"></div>
<svg style="left:994px;top:392px" width="7" height="4" viewBox="0 0 7 4"><path d="M.4 0h6.200L3.500 3.600z" fill="#000"/></svg>
<div style="left:1021px;top:381px;width:98px;height:27px;background:#fafafa;box-shadow:0 0 0 1px #f3f3f3;"></div>
<svg style="left:1024px;top:385px" width="16" height="16" viewBox="0 0 16 16"><path d="M2 11l1.500-4L11 .5 13.500 3 6 10.500z" fill="#f0b43a" stroke="#9c6a0c" stroke-width=".9"/><path d="M2 11l1.200-3 1.800 1.800z" fill="#3a3a3a"/>
<path d="M8 13.500h7" stroke="#2a5a9a" stroke-width="1.600"/></svg>
<div style="left:1045px;top:388px;width:56px;height:12px;box-sizing:border-box;background:#808080;border:1px solid #23447a;box-shadow:inset 0 0 0 1px #c8c8c8;"></div>
<svg style="left:1108px;top:392px" width="7" height="4" viewBox="0 0 7 4"><path d="M.4 0h6.200L3.500 3.600z" fill="#000"/></svg>
<span id="l_style" class="t" style="top:418.50px;font-size:12px;line-height:16px;color:#000;letter-spacing:-0.455px;left:906px;"><u>S</u>tyle:</span>
<span id="l_transp2" class="t" style="top:418.50px;font-size:12px;line-height:16px;color:#000;letter-spacing:-0.220px;left:1020px;"><u>T</u>ransparency:</span>
<div style="left:906px;top:437px;width:108px;height:23px;box-sizing:border-box;background:#fff;border:1px solid #7a7a7a;"></div>
<div style="left:996px;top:439px;width:17px;height:19px;box-sizing:border-box;background:#e4e4e4;border:1px solid #adadad;"></div>
<svg style="left:1000px;top:446px" width="9" height="6" viewBox="0 0 9 6"><path d="M1 1l3.500 3.500L8 1" stroke="#444" stroke-width="1.800" fill="none"/></svg>
<span id="p_none2" class="t" style="top:441.00px;font-size:12px;line-height:16px;color:#000;letter-spacing:0.018px;left:909px;">- none -</span>
<div style="left:1020px;top:437px;width:108px;height:23px;box-sizing:border-box;background:#fff;border:1px solid #ababab;"></div>
<div style="left:1110px;top:439px;width:15px;height:19px;box-sizing:border-box;background:#f0f0f0;border:1px solid #c0c0c0;"></div>
<div style="left:1110px;top:448.0px;width:15px;height:1px;background:#c0c0c0;"></div>
<svg style="left:1114px;top:442px" width="6" height="4" viewBox="0 0 6 4"><path d="M0 4h6L3 0z" fill="#000"/></svg>
<svg style="left:1114px;top:451px" width="6" height="4" viewBox="0 0 6 4"><path d="M0 0h6L3 4z" fill="#000"/></svg>
<span id="p_pct2" class="t" style="top:441.00px;font-size:12px;line-height:16px;color:#222;letter-spacing:-1.172px;left:1024px;">0%</span>
<span id="l_arrow" class="t" style="top:473.00px;font-size:12px;line-height:16px;color:#000;letter-spacing:0.002px;left:906px;"><u>A</u>rrow:</span>
<div style="left:906px;top:491px;width:108px;height:23px;box-sizing:border-box;background:#fff;border:1px solid #7a7a7a;"></div>
<div style="left:996px;top:493px;width:17px;height:19px;box-sizing:border-box;background:#e4e4e4;border:1px solid #adadad;"></div>
<svg style="left:1000px;top:500px" width="9" height="6" viewBox="0 0 9 6"><path d="M1 1l3.500 3.500L8 1" stroke="#444" stroke-width="1.800" fill="none"/></svg>
<span id="p_none3" class="t" style="top:495.00px;font-size:12px;line-height:16px;color:#000;letter-spacing:0.018px;left:909px;">- none -</span>
<div style="left:1020px;top:491px;width:108px;height:23px;box-sizing:border-box;background:#fff;border:1px solid #7a7a7a;"></div>
<div style="left:1110px;top:493px;width:17px;height:19px;box-sizing:border-box;background:#e4e4e4;border:1px solid #adadad;"></div>
<svg style="left:1114px;top:500px" width="9" height="6" viewBox="0 0 9 6"><path d="M1 1l3.500 3.500L8 1" stroke="#444" stroke-width="1.800" fill="none"/></svg>
<span id="p_none4" class="t" style="top:495.00px;font-size:12px;line-height:16px;color:#000;letter-spacing:0.018px;left:1023px;">- none -</span>
<span id="l_corner" class="t" style="top:527.00px;font-size:12px;line-height:16px;color:#000;letter-spacing:-0.200px;left:906px;"><u>C</u>orner style</span>
<span id="l_cap" class="t" style="top:527.00px;font-size:12px;line-height:16px;color:#000;letter-spacing:-0.339px;left:1020px;">Ca<u>p</u> style</span>
<div style="left:906px;top:546px;width:108px;height:23px;box-sizing:border-box;background:#fff;border:1px solid #7a7a7a;"></div>
<div style="left:996px;top:548px;width:17px;height:19px;box-sizing:border-box;background:#e4e4e4;border:1px solid #adadad;"></div>
<svg style="left:1000px;top:555px" width="9" height="6" viewBox="0 0 9 6"><path d="M1 1l3.500 3.500L8 1" stroke="#444" stroke-width="1.800" fill="none"/></svg>
<span id="p_rounded" class="t" style="top:550.00px;font-size:12px;line-height:16px;color:#000;letter-spacing:-0.174px;left:908.5px;">Rounded</span>
<div style="left:1020px;top:546px;width:108px;height:23px;box-sizing:border-box;background:#fff;border:1px solid #7a7a7a;"></div>
<div style="left:1110px;top:548px;width:17px;height:19px;box-sizing:border-box;background:#e4e4e4;border:1px solid #adadad;"></div>
<svg style="left:1114px;top:555px" width="9" height="6" viewBox="0 0 9 6"><path d="M1 1l3.500 3.500L8 1" stroke="#444" stroke-width="1.800" fill="none"/></svg>
<span id="p_flat" class="t" style="top:550.00px;font-size:12px;line-height:16px;color:#000;letter-spacing:-0.429px;left:1022.5px;">Flat</span>
<div style="left:899px;top:578.5px;width:236px;height:27px;background:linear-gradient(#dedede,#e9e9e9 45%,#efefef);"></div>
<div style="left:899px;top:604.5px;width:236px;height:1px;background:#e4e4e4;"></div>
<svg style="left:905px;top:588px" width="9" height="9" viewBox="0 0 9 9"><rect x=".5" y=".5" width="8" height="8" fill="#fff" stroke="#6e6e6e"/><path d="M2 4.500h5M4.500 2v5" stroke="#1a1a1a" stroke-width="1"/></svg>
<span id="sec_pos" class="t" style="top:585.00px;font-size:12px;line-height:16px;color:#111;font-weight:bold;letter-spacing:-0.415px;left:919px;">Position and Size</span>
<svg style="left:1118px;top:583px" width="12" height="12" viewBox="0 0 12 12"><rect x=".5" y=".5" width="11" height="10" fill="#fdfdfd" stroke="#4a79b8"/><rect x="1" y="1" width="10" height="2.500" fill="#b9d1ee"/>
<rect x="2.500" y="6.500" width="1.300" height="1.300" fill="#2d5ea3"/><rect x="5.300" y="6.500" width="1.300" height="1.300" fill="#2d5ea3"/><rect x="8.100" y="6.500" width="1.300" height="1.300" fill="#2d5ea3"/></svg>
<div style="left:891px;top:410px;width:2px;height:1px;background:#7a7a7a;"></div>
<div style="left:892px;top:411px;width:1px;height:1px;background:#9a9a9a;"></div>
<div style="left:891px;top:414px;width:2px;height:1px;background:#7a7a7a;"></div>
<div style="left:892px;top:415px;width:1px;height:1px;background:#9a9a9a;"></div>
<div style="left:891px;top:418px;width:2px;height:1px;background:#7a7a7a;"></div>
<div style="left:892px;top:419px;width:1px;height:1px;background:#9a9a9a;"></div>
<div style="left:891px;top:422px;width:2px;height:1px;background:#7a7a7a;"></div>
<div style="left:892px;top:423px;width:1px;height:1px;background:#9a9a9a;"></div>
<div style="left:891px;top:426px;width:2px;height:1px;background:#7a7a7a;"></div>
<div style="left:892px;top:427px;width:1px;height:1px;background:#9a9a9a;"></div>
<svg style="left:890px;top:401px" width="4" height="5" viewBox="0 0 4 5"><path d="M.5 0V5L4 2.500Z" fill="#555"/></svg>
<svg style="left:890px;top:431px" width="4" height="5" viewBox="0 0 4 5"><path d="M.5 0V5L4 2.500Z" fill="#555"/></svg>
<!-- tabbar -->
<div style="left:1136px;top:117px;width:39px;height:603px;background:#f0f0f0;"></div>
<div style="left:1173px;top:117px;width:1px;height:603px;background:#d2d2d2;"></div>
<svg style="left:1150px;top:132px" width="12" height="12" viewBox="0 0 13 13"><path d="M1 1.500h8M1 4.500h8M1 7.500h8" stroke="#4a4a4a" stroke-width="1.200"/><path d="M6 9.500h6l-3 3.300z" fill="#000"/></svg>
<div style="left:1139px;top:159px;width:32px;height:32px;box-sizing:border-box;background:#f7f7f7;border:1px solid #bdbdbd;border-radius:4px;"></div>
<svg style="left:1143px;top:163px" width="24" height="24" viewBox="0 0 28 28"><ellipse cx="15" cy="25.500" rx="9" ry="1.500" fill="#000" opacity=".13"/>
<path d="M4 8l7-3.500 6 2 6-2.500 3 1.500v13l-9 5-13-5z" fill="#2f9be8"/>
<path d="M4 8l7-3.500 6 2.500-7 3.500z" fill="#6cc4f8"/><path d="M4 8v6.500l6 2.500v-6.500z" fill="#2a93e0"/><path d="M10 10.500l7-3.500v6.500l-7 3.500z" fill="#1f7fd0"/>
<path d="M4 15l6 2.500v6l-6-3z" fill="#3aa0ea"/>
<path d="M17 7l6-2.500 3 1.500-6 3z" fill="#b4ec6a"/><path d="M20 9l6-3v6.500l-6 3z" fill="#6cc82a"/><path d="M17 7l3 2v6.500l-3-2z" fill="#8ad83a"/>
<path d="M10.500 17.500l6.500-3.500 6 2.500-6 3.500z" fill="#b4ec6a"/><path d="M10.500 17.500v6l6.500 2.500v-6z" fill="#7ed030"/><path d="M17 20l6-3.500 3-1.500v6.500l-9 4.500z" fill="#5cb81e"/>
<path d="M10 11v6M17 13.500v6.500M4 14.700l6 2.500M20 15.500l6-3" stroke="#eaf8ff" stroke-width=".9" fill="none" opacity=".9"/></svg>
<svg style="left:1143px;top:198px" width="24" height="24" viewBox="0 0 28 28"><ellipse cx="14.500" cy="26" rx="10" ry="1.400" fill="#000" opacity=".14"/>
<rect x="3.500" y="2.500" width="22" height="17" fill="#f7fafd" stroke="#6a7f9a" stroke-width="1.200"/><rect x="4.500" y="3.500" width="20" height="2.500" fill="#4f7fc0"/>
<path d="M6 8.500h17" stroke="#9fb2c8" stroke-width="1"/>
<path d="M8 13l1.700-2.500 1.700 2.500v9.500a1.700 1.700 0 0 1-3.400 0z" fill="#2a6fd8" stroke="#173f86" stroke-width=".6"/>
<path d="M13 13l1.700-2.500 1.700 2.500v9.500a1.700 1.700 0 0 1-3.400 0z" fill="#f0a01e" stroke="#8f5b05" stroke-width=".6"/>
<path d="M18 13l1.700-2.500 1.700 2.500v9.500a1.700 1.700 0 0 1-3.400 0z" fill="#3cc83c" stroke="#17711a" stroke-width=".6"/></svg>
<svg style="left:1143px;top:232px" width="24" height="24" viewBox="0 0 28 28"><ellipse cx="13" cy="26.500" rx="9" ry="1.300" fill="#000" opacity=".12"/>
<path d="M19 6h8M21 10h7M22 14h6M21 18h6M19 22h7" stroke="#f6c04a" stroke-width="1.500"/>
<path d="M13 1.500l3.700 7.700 8.500 1.100-6.200 5.900 1.600 8.400L13 20.500l-7.600 4.100 1.600-8.400L.8 10.300l8.500-1.100z" fill="#fbc234" stroke="#e8961a" stroke-width="1.300" stroke-linejoin="round"/>
<path d="M13 5l2.500 5.500 5.500.8-8 1.200-6-1.200 3.500-.8z" fill="#fde58a" opacity=".9"/></svg>
<svg style="left:1143px;top:267px" width="24" height="24" viewBox="0 0 28 28"><rect x="2.500" y="4.500" width="14" height="17" fill="#fbfdff" stroke="#7d8a99" stroke-width="1"/><path d="M5 8h8M5 11h7M5 14h8M5 17h6" stroke="#9fb2c8" stroke-width="1.200"/>
<rect x="13.500" y="2.500" width="13" height="19" fill="#f2f8fe" stroke="#8fa6c0" stroke-width="1"/><rect x="14.500" y="3.500" width="11" height="5" fill="#8fc0f0"/><path d="M15 6h9M15 10h9" stroke="#b8d4f0" stroke-width="1.200"/>
<path d="M14 21l5-6 3 3 2-1.500 2.500 4.500z" fill="#5aa83a"/><path d="M20 21l3-4 3.500 4z" fill="#c9853a"/>
<path d="M6 11.500h8V8l7 6-7 6v-3.500H6z" fill="#1f78d8" stroke="#0f4f9a" stroke-width=".9"/>
<ellipse cx="15" cy="25" rx="10" ry="1.300" fill="#000" opacity=".13"/></svg>
<svg style="left:1143px;top:302px" width="24" height="24" viewBox="0 0 28 28"><ellipse cx="14" cy="26" rx="9" ry="1.300" fill="#000" opacity=".13"/>
<path d="M9 8c3-2 9-1 11 3l-8 13c-1 1-3 1-4-.5z" fill="#1e78d0" stroke="#0f4f9a" stroke-width=".8"/>
<path d="M11 9c3-1 7 0 9 3-2 3-6 5-9 2-2-2-2-4 0-5z" fill="#17365f"/>
<path d="M17 15c3-1 6 0 7 3s-2 6-6 6c-2 0-3-2-2-4 .5-1.500 2-2 3-1" fill="#6fba3a" stroke="#3c8a12" stroke-width=".7"/>
<path d="M6 4c2-2 6-2 7 1-1 2-4 3-7 2z" fill="#e9861c"/>
<path d="M16 1.500l1 2 2.200.3-1.600 1.500.4 2.200-2-1-2 1 .4-2.200-1.600-1.500 2.200-.3z" fill="#c46ae0"/>
<path d="M23.500 3l1.100 2.300 2.500.4-1.800 1.700.4 2.500-2.200-1.200-2.200 1.200.4-2.500-1.800-1.700 2.500-.4z" fill="#f2c62e"/>
<path d="M4 11l1 2 2.200.3-1.600 1.500.4 2.200-2-1-2 1 .4-2.200L.8 13.300l2.200-.3z" fill="#f06ab0"/>
<path d="M25.500 12l.9 1.800 2 .3-1.500 1.400.4 2-1.800-1-1.800 1 .4-2-1.500-1.400 2-.3z" fill="#e0453a"/></svg>
<svg style="left:1143px;top:337px" width="24" height="24" viewBox="0 0 28 28"><ellipse cx="15" cy="26" rx="10" ry="1.300" fill="#000" opacity=".13"/>
<path d="M4 9l17-6.500 6 13-17 8z" fill="#f2f6fa" stroke="#a8b4c0" stroke-width="1"/>
<path d="M2 6.500l18-3 4 15-18 4.500z" fill="#fdfefe" stroke="#9aa8b6" stroke-width="1"/>
<path d="M4.500 8.500l14-2.300 3 10.800-14 3.500z" fill="#7fc4f4"/>
<path d="M6.500 16.500l15-3.800.5 4.300-14 3.500z" fill="#5aa83a"/><path d="M13 16.500l6-1.500.3 1.800-6 1.500z" fill="#a0622a"/>
<path d="M5 9l4-.7" stroke="#8fd04a" stroke-width="1.600"/>
<path d="M8.500 14.500l4-3.500 4.500 2" fill="none" stroke="#1d4f96" stroke-width="1.500"/><path d="M10 14.500v3.500l5-1.200v-3.300" fill="#dfeaf6" stroke="#1d4f96" stroke-width=".8"/></svg>
<svg style="left:1143px;top:372px" width="24" height="24" viewBox="0 0 28 28"><circle cx="14" cy="14" r="12" fill="#f2a51e" stroke="#c98412" stroke-width="1"/><circle cx="14" cy="14" r="9.300" fill="#fbfdff" stroke="#e0b050" stroke-width=".8"/>
<path d="M21 8.500l-5.200 7.800-2.600-2.600z" fill="#e0342d"/><path d="M7.500 21.500l5.700-7.800 2.600 2.600z" fill="#3f7fe0"/><circle cx="14.500" cy="15" r="1.200" fill="#f4f4f4" stroke="#888" stroke-width=".5"/>
<text x="14" y="9" font-size="6.500" font-weight="bold" fill="#1f2f4a" text-anchor="middle" font-family="Liberation Sans,sans-serif">N</text></svg>
<!-- drawbar -->
<div style="left:8px;top:721px;width:1167px;height:32px;background:linear-gradient(#f9fafb,#f2f3f4);"></div>
<div style="left:8px;top:752px;width:1167px;height:1px;background:#a6a6a6;"></div>
<div style="left:795px;top:722px;width:1px;height:31px;background:#dcdddf;"></div>
<div style="left:12px;top:727px;width:2px;height:1px;background:#8a8a8a;"></div>
<div style="left:13px;top:728px;width:1px;height:1px;background:#b8b8b8;"></div>
<div style="left:12px;top:731px;width:2px;height:1px;background:#8a8a8a;"></div>
<div style="left:13px;top:732px;width:1px;height:1px;background:#b8b8b8;"></div>
<div style="left:12px;top:735px;width:2px;height:1px;background:#8a8a8a;"></div>
<div style="left:13px;top:736px;width:1px;height:1px;background:#b8b8b8;"></div>
<div style="left:12px;top:739px;width:2px;height:1px;background:#8a8a8a;"></div>
<div style="left:13px;top:740px;width:1px;height:1px;background:#b8b8b8;"></div>
<div style="left:12px;top:743px;width:2px;height:1px;background:#8a8a8a;"></div>
<div style="left:13px;top:744px;width:1px;height:1px;background:#b8b8b8;"></div>
<div style="left:20px;top:724px;width:25px;height:27px;box-sizing:border-box;background:#c2dcf5;border:1px solid #84b4e6;"></div>
<svg style="left:24px;top:729px" width="16" height="16" viewBox="0 0 16 16"><path d="M4.500 .8v12.400l3-2.800 2 4.600 2-.9-2-4.500h4.200z" fill="#fff" stroke="#111" stroke-width="1.100" stroke-linejoin="round"/></svg>
<svg style="left:57px;top:729px" width="16" height="16" viewBox="0 0 16 16"><path d="M1 15L15 1" stroke="#2f6fc4" stroke-width="1.500"/></svg>
<svg style="left:82px;top:729px" width="16" height="16" viewBox="0 0 16 16"><path d="M.5 8.500h13M9 3.500l5 5-5 5" stroke="#2f6fc4" stroke-width="1.700" fill="none"/></svg>
<svg style="left:107px;top:729px" width="16" height="16" viewBox="0 0 16 16"><rect x=".6" y="3.600" width="14.800" height="9" fill="#4f98ea" stroke="#1d4f96" stroke-width="1.200"/><rect x="1.500" y="4.500" width="13" height="3" fill="#86bcf5" opacity=".7"/></svg>
<svg style="left:132px;top:729px" width="16" height="16" viewBox="0 0 16 16"><ellipse cx="8" cy="8.500" rx="7.400" ry="4.900" fill="#4f98ea" stroke="#1d4f96" stroke-width="1.200"/><ellipse cx="8" cy="7" rx="5.500" ry="2.500" fill="#86bcf5" opacity=".6"/></svg>
<svg style="left:157px;top:729px" width="16" height="16" viewBox="0 0 16 16"><path d="M1.500 1.500h13v4h-1.300c-.3-1.500-1-2-3-2V13c0 1 .5 1.300 1.800 1.300v1.200H4v-1.200c1.300 0 1.800-.3 1.800-1.300V3.500c-2 0-2.700.5-3 2H1.500z" fill="#3d6fa8" stroke="#1f4a7a" stroke-width=".5"/></svg>
<svg style="left:189px;top:729px" width="16" height="16" viewBox="0 0 16 16"><path d="M.5 9.500c2-1 3.500 0 3.500 2s4 3 6 1 4-1 5.500-1" stroke="#2f6fc4" stroke-width="1.500" fill="none"/>
<path d="M5 10l1.300-3.500L12.500 .5 15 3 9 9.200z" fill="#f6c431" stroke="#a37a10" stroke-width=".8"/><path d="M11.500 1.500l1-1 2.500 2.500-1 1z" fill="#e4576b"/><path d="M5 10l1-2.500 1.500 1.500z" fill="#333"/></svg>
<svg style="left:226px;top:729px" width="16" height="16" viewBox="0 0 16 16"><path d="M3 3.500h4c2 0 2 9 4 9h2" stroke="#2f6fc4" stroke-width="1.600" fill="none"/><circle cx="3" cy="3.500" r="2.300" fill="#4f98ea" stroke="#1d4f96"/><circle cx="13" cy="12.500" r="2.300" fill="#4f98ea" stroke="#1d4f96"/></svg>
<svg style="left:260px;top:729px" width="16" height="16" viewBox="0 0 16 16"><path d="M8 .8L15.200 8L8 15.200L.8 8z" fill="#4f98ea" stroke="#1d4f96" stroke-width="1.100"/><path d="M8 2.500L13.500 8H2.500z" fill="#86bcf5" opacity=".7"/></svg>
<svg style="left:296px;top:729px" width="16" height="16" viewBox="0 0 16 16"><circle cx="8" cy="8" r="7.300" fill="#4f98ea" stroke="#2a62ae" stroke-width="1"/><ellipse cx="8" cy="5.500" rx="5.500" ry="3.500" fill="#86bcf5" opacity=".6"/>
<circle cx="5.500" cy="6" r="1" fill="#1d3f7a"/><circle cx="10.500" cy="6" r="1" fill="#1d3f7a"/><path d="M4 9.500c2 3 6 3 8 0" stroke="#1d3f7a" stroke-width="1.200" fill="none"/></svg>
<svg style="left:332px;top:729px" width="16" height="16" viewBox="0 0 16 16"><path d="M.8 8L5.500 3.500V6h5V3.500L15.200 8l-4.700 4.500V10h-5v2.500z" fill="#7fb6f2" stroke="#2a62ae" stroke-width="1.200"/></svg>
<svg style="left:369px;top:729px" width="16" height="16" viewBox="0 0 16 16"><rect x="1.600" y="1.600" width="13" height="13" fill="#4f98ea" stroke="#1d4f96" stroke-width="1.200"/><path d="M5 2v12.500M2 5h12.500" stroke="#e8f2fd" stroke-width="1.300"/><rect x="5.600" y="5.600" width="8.500" height="8.500" fill="#5ea3ee" opacity=".8"/></svg>
<svg style="left:405px;top:729px" width="16" height="16" viewBox="0 0 16 16"><path d="M2.500 1h11a2 2 0 0 1 2 2v6a2 2 0 0 1-2 2H8l-5.500 4.500L4.500 11H2.500a2 2 0 0 1-2-2V3a2 2 0 0 1 2-2z" fill="#5aa0ee" stroke="#1d4f96" stroke-width="1.100"/><path d="M2 3.500c3-2 9-2 12 0v2H2z" fill="#9ac8f8" opacity=".6"/></svg>
<svg style="left:440px;top:729px" width="16" height="16" viewBox="0 0 16 16"><path d="M8 .8l2.200 5 5.300.5-4 3.600 1.200 5.300L8 12.500 3.300 15.200l1.200-5.300-4-3.600 5.300-.5z" fill="#5aa0ee" stroke="#1d4f96" stroke-width="1.100"/><path d="M8 3.500l1.500 3.500 3.500.3-6.500.2z" fill="#b6d8fb"/></svg>
<svg style="left:486px;top:729px" width="16" height="16" viewBox="0 0 16 16"><path d="M2 14.500h13L10 8l5-6.500H7L2 8z" fill="none" stroke="#4a4f57" stroke-width="1"/>
<g fill="#eaf2fb" stroke="#1d3f7a" stroke-width="1.100"><circle cx="2" cy="14" r="1.500"/><circle cx="14.500" cy="14" r="1.500"/><circle cx="10" cy="8" r="1.500"/><circle cx="14.500" cy="2" r="1.500"/><circle cx="7" cy="2" r="1.500"/><circle cx="2" cy="8" r="1.500"/></g></svg>
<svg style="left:512px;top:729px" width="16" height="16" viewBox="0 0 16 16"><path d="M2.500 14L7 9.500" stroke="#2f4f8a" stroke-width="1.100"/><circle cx="2" cy="14" r="1.500" fill="#eaf2fb" stroke="#1d3f7a" stroke-width="1.100"/>
<path d="M6 8.500l5-6 4 3.500-5.500 5z" fill="#f0b43a" stroke="#9c6a0c" stroke-width=".9"/><path d="M10.500 1.500l2-1.500 3.500 3.500-1.500 2z" fill="#f6d070" stroke="#9c6a0c" stroke-width=".8"/><path d="M6 8.500l1.500 2.500-2 1z" fill="#222"/></svg>
<svg style="left:544px;top:729px" width="16" height="16" viewBox="0 0 16 16"><path d="M5.500 3.500L8 .8l2.500 2.700" stroke="#9a9a9a" stroke-width="1" fill="none"/><rect x="1" y="3.500" width="14" height="11.500" fill="#f3b33d" stroke="#9a5b08" stroke-width="1.200"/>
<rect x="3.500" y="6" width="9" height="6.500" fill="#f4f7fb" stroke="#b07a1c" stroke-width=".8"/><text x="8" y="11.800" font-size="6.500" font-weight="bold" fill="#23447a" text-anchor="middle" font-family="Liberation Sans,sans-serif">A</text></svg>
<svg style="left:568px;top:729px" width="16" height="16" viewBox="0 0 16 16"><circle cx="11" cy="5.500" r="4.800" fill="#f8c440" stroke="#c88a0a" stroke-width="1"/><path d="M11 7.500l4.500 7.500h-9z" fill="#3f7fb8" stroke="#1d3f6b" stroke-width="1"/>
<rect x=".8" y="5" width="8.500" height="7.500" rx="1" fill="#ee5a24" stroke="#a32d09" stroke-width="1"/></svg>
<svg style="left:594px;top:729px" width="16" height="16" viewBox="0 0 16 16"><path d="M5.500 3.500L8 .8l2.500 2.700" stroke="#9a9a9a" stroke-width="1" fill="none"/><rect x="1" y="3.500" width="14" height="11.500" fill="#f3b33d" stroke="#9a5b08" stroke-width="1.200"/>
<rect x="3.500" y="6" width="9" height="6.500" fill="#7fc0ee" stroke="#6a4a0c" stroke-width=".8"/><path d="M3.800 12.200l3-3 2 1.500 1.500-1 2 2.500z" fill="#4c9a2a"/></svg>
<svg style="left:627px;top:729px" width="16" height="16" viewBox="0 0 16 16"><path d="M9 15C3 15 .5 10 2 6S9 .5 12.500 4l1.500-1.500.5 6.500-6-1L10.500 6C8.500 4 5.500 4.500 4.500 7s.5 5.500 4 5.500c1.500 0 2.500-1 2.500-2 0-1.500-2-2-3-.8" fill="#6a98c8" stroke="#2a4f7c" stroke-width="1"/></svg>
<svg style="left:651px;top:729px" width="16" height="16" viewBox="0 0 16 16"><rect x=".5" y=".5" width="15" height="15" fill="#fbfbfb" stroke="#b9b9b9"/><path d="M1.500 .5v15" stroke="#3aa63a" stroke-width="1.600"/>
<rect x="3" y="6" width="4" height="4" fill="#3f8be0" stroke="#1d4f96" stroke-width=".8"/><path d="M15 7h-3V5L8 8l4 3V9h3z" fill="#ee5a24" stroke="#a32d09" stroke-width=".7"/></svg>
<svg style="left:687px;top:729px" width="16" height="16" viewBox="0 0 16 16"><rect x="6.500" y="1" width="8.500" height="8.500" rx="1" fill="#2d4a70" stroke="#162a47"/><rect x="1" y="7" width="8" height="8" rx="1" fill="#2d4a70" stroke="#162a47"/>
<rect x="3.500" y="3.500" width="10" height="10" rx="1" fill="#f8c440" stroke="#b07a0c" stroke-width="1.100"/></svg>
<svg style="left:732px;top:729px" width="16" height="16" viewBox="0 0 16 16"><path d="M1.500 1h5v5.500h-5z" fill="#3f8be0" stroke="#1d4f96" stroke-width=".9"/>
<path d="M2 7c0 4 3 6 6 6v-2l3.500 3L8 17v-2c-4 0-7-3-7-8z" fill="#ee5a24" stroke="#a32d09" stroke-width=".7" transform="translate(0 -2)"/>
<path d="M8.500 8.500l2-2h5v5l-2 2z" fill="#8fc3f7" stroke="#1d4f96" stroke-width=".8"/><rect x="8.500" y="8.500" width="5" height="5.500" fill="#3f8be0" stroke="#1d4f96" stroke-width=".8"/></svg>
<svg style="left:757px;top:729px" width="16" height="16" viewBox="0 0 16 16"><g stroke="#f29526" stroke-width="1.300"><path d="M4.500 1v11M0 6.500h9.500M1 2.500l7 8M8 2.500l-7 8"/></g>
<rect x="9" y=".8" width="6.500" height="6.500" fill="#2f6fc4" stroke="#173f86" stroke-width=".8"/><path d="M10.500 6l3.500-3.500M11.500 2.300H14v2.500" stroke="#fff" stroke-width="1.200" fill="none"/>
<path d="M8.500 6v9l2-1.800 1.300 3 1.500-.7-1.300-2.900H15z" fill="#fff" stroke="#111" stroke-width=".9" stroke-linejoin="round"/></svg>
<svg style="left:212px;top:735px" width="7" height="4" viewBox="0 0 7 4"><path d="M.4 0h6.200L3.500 3.600z" fill="#000"/></svg>
<svg style="left:248px;top:735px" width="7" height="4" viewBox="0 0 7 4"><path d="M.4 0h6.200L3.500 3.600z" fill="#000"/></svg>
<svg style="left:284px;top:735px" width="7" height="4" viewBox="0 0 7 4"><path d="M.4 0h6.200L3.500 3.600z" fill="#000"/></svg>
<svg style="left:320px;top:735px" width="7" height="4" viewBox="0 0 7 4"><path d="M.4 0h6.200L3.500 3.600z" fill="#000"/></svg>
<svg style="left:356px;top:735px" width="7" height="4" viewBox="0 0 7 4"><path d="M.4 0h6.200L3.500 3.600z" fill="#000"/></svg>
<svg style="left:392px;top:735px" width="7" height="4" viewBox="0 0 7 4"><path d="M.4 0h6.200L3.500 3.600z" fill="#000"/></svg>
<svg style="left:428px;top:735px" width="7" height="4" viewBox="0 0 7 4"><path d="M.4 0h6.200L3.500 3.600z" fill="#000"/></svg>
<svg style="left:464px;top:735px" width="7" height="4" viewBox="0 0 7 4"><path d="M.4 0h6.200L3.500 3.600z" fill="#000"/></svg>
<svg style="left:674px;top:735px" width="7" height="4" viewBox="0 0 7 4"><path d="M.4 0h6.200L3.500 3.600z" fill="#000"/></svg>
<svg style="left:710px;top:735px" width="7" height="4" viewBox="0 0 7 4"><path d="M.4 0h6.200L3.500 3.600z" fill="#000"/></svg>
<div style="left:48px;top:730px;width:1px;height:15px;background:#c9cacb;"></div>
<div style="left:182px;top:730px;width:1px;height:15px;background:#c9cacb;"></div>
<div style="left:477px;top:730px;width:1px;height:15px;background:#c9cacb;"></div>
<div style="left:536px;top:730px;width:1px;height:15px;background:#c9cacb;"></div>
<div style="left:618px;top:730px;width:1px;height:15px;background:#c9cacb;"></div>
<div style="left:724px;top:730px;width:1px;height:15px;background:#c9cacb;"></div>
<div style="left:783px;top:724px;width:11px;height:26px;background:linear-gradient(#f3f3f3,#d6d6d6 40%,#8a8a8a);"></div>
<svg style="left:785px;top:742px" width="7" height="4" viewBox="0 0 7 4"><path d="M.4 0h6.200L3.500 3.600z" fill="#000"/></svg>
<!-- statusbar -->
<div style="left:8px;top:753px;width:1167px;height:22px;background:#f0f0f0;"></div>
<div style="left:8px;top:753px;width:1167px;height:1px;background:#fbfbfb;"></div>
<div style="left:8px;top:774px;width:1167px;height:1px;background:#fafafa;"></div>
<span id="st_sel" class="t" style="top:758.00px;font-size:12px;line-height:16px;color:#000;letter-spacing:-0.252px;left:19px;">Shape 'AutoShape 3' selected</span>
<div style="left:420px;top:756px;width:1px;height:18px;background:#a0a0a0;"></div>
<div style="left:421px;top:756px;width:1px;height:18px;background:#fff;"></div>
<div style="left:641px;top:756px;width:1px;height:18px;background:#a0a0a0;"></div>
<div style="left:642px;top:756px;width:1px;height:18px;background:#fff;"></div>
<div style="left:657px;top:756px;width:1px;height:18px;background:#a0a0a0;"></div>
<div style="left:658px;top:756px;width:1px;height:18px;background:#fff;"></div>
<div style="left:686px;top:756px;width:1px;height:18px;background:#a0a0a0;"></div>
<div style="left:687px;top:756px;width:1px;height:18px;background:#fff;"></div>
<div style="left:756px;top:756px;width:1px;height:18px;background:#a0a0a0;"></div>
<div style="left:757px;top:756px;width:1px;height:18px;background:#fff;"></div>
<div style="left:995px;top:756px;width:1px;height:18px;background:#a0a0a0;"></div>
<div style="left:996px;top:756px;width:1px;height:18px;background:#fff;"></div>
<div style="left:1138px;top:756px;width:1px;height:18px;background:#a0a0a0;"></div>
<div style="left:1139px;top:756px;width:1px;height:18px;background:#fff;"></div>
<svg style="left:427px;top:758px" width="16" height="16" viewBox="0 0 16 16"><path d="M3.500 0v5M0 3.500h5" stroke="#1d3f7a" stroke-width="1.200"/><rect x="3.500" y="3.500" width="11" height="7" fill="none" stroke="#222" stroke-width="1" stroke-dasharray="1.500 1.200"/></svg>
<span id="st_pos" class="t" style="top:758.00px;font-size:12px;line-height:16px;color:#000;letter-spacing:-0.493px;left:448.5px;">6.69 / 5.51</span>
<svg style="left:535px;top:758px" width="16" height="16" viewBox="0 0 16 16"><rect x="4.500" y="3.500" width="10" height="8" fill="none" stroke="#222" stroke-width="1" stroke-dasharray="1.500 1.200"/><path d="M1.500 4v7M.5 5l1-1.500 1 1.500M.5 10l1 1.500 1-1.500M5 1.500h9M6 .5L4.500 1.500 6 2.500M13 .5l1.500 1-1.500 1" stroke="#222" stroke-width=".8" fill="none"/></svg>
<span id="st_size" class="t" style="top:758.00px;font-size:12px;line-height:16px;color:#000;letter-spacing:-0.672px;left:555.5px;">1.78 x 1.67</span>
<span id="st_star" class="t" style="top:759.00px;font-size:12px;line-height:16px;color:#000;left:645px;">*</span>
<span id="st_slide" class="t" style="top:758.00px;font-size:12px;line-height:16px;color:#000;letter-spacing:-0.264px;left:688.5px;">Slide 11 / 46</span>
<span id="st_title2" class="t" style="top:758.00px;font-size:12px;line-height:16px;color:#000;letter-spacing:-0.151px;left:762.5px;">Title2</span>
<svg style="left:998px;top:757px" width="136" height="18" viewBox="0 0 136 18">
<path d="M19 9.500h97" stroke="#5a5a5a" stroke-width="1"/><path d="M66.500 5v9" stroke="#5a5a5a" stroke-width="1"/>
<circle cx="8.500" cy="9.500" r="5.300" fill="#f4f7fb" stroke="#46607f" stroke-width="1.300"/><path d="M5.500 9.500h6" stroke="#23395a" stroke-width="1.400"/>
<circle cx="126.500" cy="9.500" r="5.300" fill="#f4f7fb" stroke="#46607f" stroke-width="1.300"/><path d="M123.500 9.500h6M126.500 6.500v6" stroke="#23395a" stroke-width="1.400"/>
<circle cx="38.500" cy="9.500" r="3.600" fill="#5d7fa6" stroke="#2c4566" stroke-width="1.200"/>
</svg>
<span id="st_zoom" class="t" style="top:758.00px;font-size:12px;line-height:16px;color:#222;letter-spacing:-0.844px;left:1143.5px;">46%</span>
</div></body></html>
